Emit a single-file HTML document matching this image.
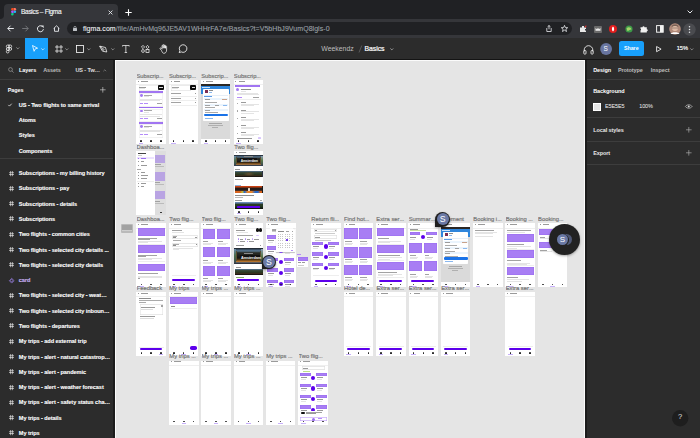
<!DOCTYPE html>
<html><head><meta charset="utf-8">
<style>
*{margin:0;padding:0;box-sizing:border-box}
html,body{width:700px;height:438px;overflow:hidden;background:#2c2c2c;font-family:"Liberation Sans",sans-serif}
.a{position:absolute}
svg{position:absolute;overflow:visible}
#tabs{left:0;top:0;width:700px;height:19px;background:#202124}
#tab{left:4px;top:4px;width:114px;height:16px;background:#35363a;border-radius:4px 4px 0 0}
#urlrow{left:0;top:19px;width:700px;height:18.5px;background:#35363a}
#pill{left:67px;top:21.6px;width:505px;height:13.9px;background:#202124;border-radius:7px}
#tb{left:0;top:37.5px;width:700px;height:21.5px;background:#2c2c2c}
#tbline{left:0;top:58.6px;width:700px;height:1.2px;background:#141414}
#left{left:0;top:59.8px;width:113px;height:379px;background:#2c2c2c}
#leftb{left:112.6px;top:59.8px;width:2px;height:379px;background:#1c1c1c}
#right{left:587px;top:59.8px;width:113px;height:379px;background:#2c2c2c}
#rightb{left:585px;top:59.8px;width:2px;height:379px;background:#1c1c1c}
#canvas{left:114.6px;top:59.8px;width:470.4px;height:380px;background:#e5e5e5;border-left:1.4px solid #fbfbfb;border-top:1.4px solid #fbfbfb;border-right:1.4px solid #fbfbfb;overflow:hidden}
.t{position:absolute;white-space:nowrap;line-height:1}
.fui{font-size:5.5px;letter-spacing:-0.08px;font-weight:bold;color:#fff}
.gry{color:#bdbdbd}
.div{position:absolute;height:1px;background:#3d3d3d}
.pg{position:absolute;left:18.8px;font-size:5.6px;letter-spacing:-0.08px;font-weight:bold;color:#fff;-webkit-text-stroke:0.1px #fff;white-space:nowrap;line-height:1}
.hash{position:absolute;left:9.3px;width:5px;height:5px}
.fr{position:absolute;width:29.6px;height:64px;background:#fff}
.lb{position:absolute;font-size:5.8px;color:#707070;white-space:nowrap;line-height:1;-webkit-text-stroke:0.16px #707070}
</style></head><body>
<!-- chrome tab strip -->
<div id="tabs" class="a"></div>
<div id="tab" class="a"></div>
<svg style="left:0;top:15px" width="4" height="4"><path d="M0 4 Q4 4 4 0 L4 4Z" fill="#35363a"/></svg>
<svg style="left:118px;top:15px" width="4" height="4"><path d="M4 4 Q0 4 0 0 L0 4Z" fill="#35363a"/></svg>
<svg style="left:10.6px;top:8.1px" width="5.2" height="7.6" viewBox="0 0 38 57"><path d="M19 28.5a9.5 9.5 0 1 1 19 0 9.5 9.5 0 0 1-19 0z" fill="#1abcfe"/><path d="M0 47.5A9.5 9.5 0 0 1 9.5 38H19v9.5a9.5 9.5 0 1 1-19 0z" fill="#0acf83"/><path d="M19 0v19h9.5a9.5 9.5 0 1 0 0-19H19z" fill="#ff7262"/><path d="M0 9.5A9.5 9.5 0 0 0 9.5 19H19V0H9.5A9.5 9.5 0 0 0 0 9.5z" fill="#f24e1e"/><path d="M0 28.5A9.5 9.5 0 0 0 9.5 38H19V19H9.5A9.5 9.5 0 0 0 0 28.5z" fill="#a259ff"/></svg>
<div class="t" style="left:21px;top:9px;font-size:6.6px;letter-spacing:-0.34px;color:#f1f3f4;-webkit-text-stroke:0.15px #f1f3f4">Basics – Figma</div>
<svg style="left:108.3px;top:9.6px" width="5" height="5"><path d="M0.6 0.6L4.4 4.4M4.4 0.6L0.6 4.4" stroke="#e8eaed" stroke-width="0.9"/></svg>
<svg style="left:124.8px;top:8.7px" width="7" height="7"><path d="M3.5 0.3V6.7M0.3 3.5H6.7" stroke="#fff" stroke-width="1.1"/></svg>
<svg style="left:686.5px;top:10.4px" width="6" height="4"><path d="M0.6 0.6L3 3 5.4 0.6" stroke="#e8eaed" stroke-width="1" fill="none"/></svg>
<!-- url row -->
<div id="urlrow" class="a"></div>
<svg style="left:7px;top:25.2px" width="7" height="7"><path d="M6.8 3.5H0.8M3.5 0.7L0.8 3.5 3.5 6.3" stroke="#e8eaed" stroke-width="1" fill="none"/></svg>
<svg style="left:22px;top:25.2px" width="7" height="7"><path d="M0.2 3.5H6.2M3.5 0.7L6.2 3.5 3.5 6.3" stroke="#77797d" stroke-width="0.9" fill="none"/></svg>
<svg style="left:37.3px;top:25.2px" width="7" height="7"><path d="M6 2.2A3 3 0 1 0 6.4 4.2" stroke="#e8eaed" stroke-width="1" fill="none"/><path d="M4.3 0.6L6.6 0.6 6.6 2.9Z" fill="#e8eaed"/></svg>
<svg style="left:52.5px;top:25px" width="7" height="7"><path d="M0.6 3.6L3.5 0.8 6.4 3.6M1.5 2.9V6.3H5.5V2.9" stroke="#e8eaed" stroke-width="0.9" fill="none"/></svg>
<div id="pill" class="a"></div>
<svg style="left:73px;top:26.3px" width="4" height="5"><rect x="0" y="1.9" width="4" height="3.1" rx="0.5" fill="#bdc1c6"/><path d="M0.9 2V1.5A1.1 1.1 0 0 1 3.1 1.5V2" stroke="#bdc1c6" stroke-width="0.7" fill="none"/></svg>
<div class="t" style="left:83px;top:25px;font-size:7px;letter-spacing:0.05px;color:#f1f3f4;-webkit-text-stroke:0.1px #e8eaed">figma.com<span style="color:#9aa0a6;-webkit-text-stroke:0.1px #9aa0a6">/file/AmHvMq96JE5AV1WHHrFA7e/Basics?t=V5bHbJ9VumQ8lgls-0</span></div>
<svg style="left:546px;top:24.8px" width="6" height="7"><path d="M3 0.5V4.3M1.5 1.9L3 0.5 4.5 1.9M0.8 3V6.5H5.2V3" stroke="#e8eaed" stroke-width="0.8" fill="none"/></svg>
<svg style="left:560.6px;top:25.2px" width="7" height="7"><path d="M3.5 0.4L4.4 2.6 6.7 2.7 4.9 4.2 5.5 6.5 3.5 5.2 1.5 6.5 2.1 4.2 0.3 2.7 2.6 2.6Z" stroke="#e8eaed" stroke-width="0.8" fill="none"/></svg>
<!-- extensions -->
<svg style="left:579px;top:25px" width="8" height="8"><path d="M1 2.5H3V1H5V2.5H7V4H6V5.5H7V7H1Z" fill="#e8e8e8"/><path d="M5.5 1L7.5 0.5 7 3Z" fill="#e53935"/></svg>
<svg style="left:594px;top:25.5px" width="8" height="7"><rect x="0" y="0" width="8" height="7" rx="1" fill="#6b6b6b"/><path d="M1.5 4.8L1.5 2 3 3.3 4 1.8 5 3.3 6.5 2 6.5 4.8Z" fill="#eee"/></svg>
<svg style="left:609.3px;top:24.7px" width="8" height="8"><circle cx="4" cy="4" r="4" fill="#e11d1d"/><path d="M4 1.5C5.5 2.5 5.6 5.8 4 6.6 2.5 5.8 2.5 2.5 4 1.5Z" fill="#fff"/></svg>
<svg style="left:624.6px;top:24.7px" width="8" height="8"><circle cx="4" cy="4" r="3.6" fill="#3d9a48"/><path d="M1.5 3.5C3 1.5 6 2 6.5 4.5 5 4 4 6 2.5 6Z" fill="#a7d36b"/></svg>
<svg style="left:640px;top:25px" width="8" height="8"><path d="M0.5 2.3H2.5A1 1 0 0 1 4.5 2.3H6.8V4.3A1 1 0 0 1 6.8 6.3V7.5H0.5V5.5A1 1 0 0 0 0.5 3.7Z" fill="#f1f1f1"/></svg>
<svg style="left:655.5px;top:25px" width="8" height="8"><rect x="0.6" y="0.6" width="6.6" height="6.6" stroke="#f1f1f1" stroke-width="1" fill="none"/><rect x="4" y="0.6" width="3.2" height="6.6" fill="#f1f1f1"/></svg>
<svg style="left:669px;top:23px" width="12" height="12"><circle cx="6" cy="6" r="5.8" fill="#b08a7a"/><circle cx="6" cy="5" r="3" fill="#e6c1ab"/><path d="M2.5 3.2C3 1 9 1 9.5 3.2L9 4C8 2.5 4 2.5 3 4Z" fill="#7a6357"/><rect x="3.3" y="4.3" width="5.4" height="1.4" rx="0.6" fill="none" stroke="#6d5a52" stroke-width="0.4"/><path d="M1.5 11C2.5 8.5 9.5 8.5 10.5 11" fill="#fff"/></svg>
<svg style="left:683px;top:22.7px" width="13" height="13"><circle cx="6.5" cy="6.5" r="6.2" fill="#4a4b4f"/><circle cx="6.5" cy="3.7" r="0.75" fill="#e8eaed"/><circle cx="6.5" cy="6.5" r="0.75" fill="#e8eaed"/><circle cx="6.5" cy="9.3" r="0.75" fill="#e8eaed"/></svg>

<!-- figma toolbar -->
<div id="tb" class="a"></div>
<div id="tbline" class="a"></div>
<svg style="left:6.4px;top:45px" width="6" height="8" viewBox="0 0 38 57"><path d="M19 28.5a9.5 9.5 0 1 1 19 0 9.5 9.5 0 0 1-19 0zM0 47.5A9.5 9.5 0 0 1 9.5 38H19v9.5a9.5 9.5 0 1 1-19 0zM19 0v19h9.5a9.5 9.5 0 1 0 0-19H19zM0 9.5A9.5 9.5 0 0 0 9.5 19H19V0H9.5A9.5 9.5 0 0 0 0 9.5zM0 28.5A9.5 9.5 0 0 0 9.5 38H19V19H9.5A9.5 9.5 0 0 0 0 28.5z" stroke="#fff" stroke-width="5" fill="none"/></svg>
<svg style="left:15.5px;top:47.3px" width="4" height="3"><path d="M0.4 0.5L1.8 1.9 3.2 0.5" stroke="#bbb" stroke-width="0.7" fill="none"/></svg>
<div class="a" style="left:24.7px;top:37.5px;width:23.3px;height:21.5px;background:#18a0fb"></div>
<svg style="left:32px;top:45.3px" width="6" height="7"><path d="M0.5 0.5L5.6 3.2 3.2 3.9 2.1 6.3Z" stroke="#fff" stroke-width="0.8" fill="none" stroke-linejoin="round"/></svg>
<svg style="left:41px;top:47.5px" width="4" height="3"><path d="M0.4 0.5L1.8 1.9 3.2 0.5" stroke="#fff" stroke-width="0.7" fill="none"/></svg>
<svg style="left:54.6px;top:44.8px" width="8" height="8"><path d="M2 0V8M6 0V8M0 2H8M0 6H8" stroke="#fff" stroke-width="0.7"/></svg>
<svg style="left:64.8px;top:47.5px" width="4" height="3"><path d="M0.4 0.5L1.8 1.9 3.2 0.5" stroke="#bbb" stroke-width="0.7" fill="none"/></svg>
<svg style="left:76.2px;top:44.8px" width="8" height="8"><rect x="0.5" y="0.5" width="7" height="7" stroke="#fff" stroke-width="0.8" fill="none"/></svg>
<svg style="left:87.3px;top:47.5px" width="4" height="3"><path d="M0.4 0.5L1.8 1.9 3.2 0.5" stroke="#bbb" stroke-width="0.7" fill="none"/></svg>
<svg style="left:99px;top:44.6px" width="9" height="8"><path d="M1 1.2L6.5 2.5 7.8 7 3.5 6.2 0.6 1.2ZM1 1.2L4 4.3" stroke="#fff" stroke-width="0.75" fill="none" stroke-linejoin="round"/><circle cx="4.4" cy="4.6" r="0.8" stroke="#fff" stroke-width="0.5" fill="none"/></svg>
<svg style="left:110.7px;top:47.5px" width="4" height="3"><path d="M0.4 0.5L1.8 1.9 3.2 0.5" stroke="#bbb" stroke-width="0.7" fill="none"/></svg>
<svg style="left:122px;top:44.6px" width="8" height="8"><path d="M0.5 1.5V0.5H7.2V1.5M3.85 0.5V7.5M2.6 7.5H5.1" stroke="#fff" stroke-width="0.7" fill="none"/></svg>
<svg style="left:140.6px;top:44.6px" width="9" height="8"><path d="M2 0.4L3.6 2 2 3.6 0.4 2Z M6.5 0.4L8.1 2 6.5 3.6 4.9 2Z" stroke="#fff" stroke-width="0.7" fill="none"/><circle cx="2" cy="6" r="1.4" stroke="#fff" stroke-width="0.7" fill="none"/><rect x="5" y="4.6" width="3" height="2.8" stroke="#fff" stroke-width="0.7" fill="none"/></svg>
<svg style="left:159px;top:44px" width="10" height="10"><path d="M2.5 6.5L1 4.8C0.6 4.2 1.4 3.6 2 4.2L3 5.2V1.8C3 1 4.1 1 4.1 1.8V4.2 1.2C4.1 0.4 5.3 0.4 5.3 1.2V4.2 1.7C5.3 0.9 6.5 0.9 6.5 1.7V4.3 2.5C6.5 1.8 7.6 1.8 7.6 2.5V6C7.6 8 6.5 9.3 5 9.3 3.8 9.3 3.3 8.6 2.5 6.5Z" stroke="#fff" stroke-width="0.7" fill="none" stroke-linejoin="round"/></svg>
<svg style="left:178.2px;top:44.3px" width="10" height="10"><path d="M1.2 8.6L1.9 6.6A3.8 3.8 0 1 1 3.3 7.9Z" stroke="#fff" stroke-width="0.8" fill="none" stroke-linejoin="round"/></svg>
<div class="t" style="left:321.3px;top:46.2px;font-size:6.9px;color:#bdbdbd">Weekendz</div>
<svg style="left:357.5px;top:45.3px" width="5" height="8"><path d="M3.8 0.5L1 7.5" stroke="#777" stroke-width="0.6"/></svg>
<div class="t" style="left:364.5px;top:45.9px;font-size:6.9px;color:#fff;letter-spacing:-0.05px;-webkit-text-stroke:0.2px #fff">Basics</div>
<svg style="left:389.6px;top:47.6px" width="4" height="3"><path d="M0.4 0.5L1.8 1.9 3.2 0.5" stroke="#ccc" stroke-width="0.7" fill="none"/></svg>
<svg style="left:582.5px;top:44.5px" width="11" height="10"><path d="M1.2 6.5V5A4.3 4.3 0 0 1 9.8 5V6.5" stroke="#fff" stroke-width="0.8" fill="none"/><rect x="0.8" y="5.5" width="2.2" height="3.6" rx="0.8" stroke="#fff" stroke-width="0.8" fill="none"/><rect x="8" y="5.5" width="2.2" height="3.6" rx="0.8" stroke="#fff" stroke-width="0.8" fill="none"/></svg>
<svg style="left:599.6px;top:43px" width="12.4" height="12"><circle cx="6.1" cy="6" r="5.9" fill="#6875a0"/></svg>
<div class="t" style="left:603.4px;top:45.8px;font-size:6.5px;color:#fff">S</div>
<div class="a" style="left:618.7px;top:41px;width:25.6px;height:15.4px;background:#18a0fb;border-radius:2.5px"></div>
<div class="t" style="left:623.9px;top:45.9px;font-size:5.3px;color:#fff;font-weight:bold">Share</div>
<svg style="left:655.8px;top:45.6px" width="6" height="7"><path d="M0.6 0.5L5.1 3.1 0.6 5.7Z" stroke="#eee" stroke-width="0.9" fill="none" stroke-linejoin="round"/></svg>
<div class="t" style="left:676.8px;top:45.6px;font-size:5.7px;letter-spacing:-0.1px;color:#fff;-webkit-text-stroke:0.15px #fff">15%</div>
<svg style="left:689.8px;top:47.6px" width="4" height="3"><path d="M0.4 0.5L1.8 1.9 3.2 0.5" stroke="#bbb" stroke-width="0.7" fill="none"/></svg>

<!-- left sidebar -->
<div id="left" class="a"></div>
<div id="leftb" class="a"></div>
<svg style="left:8.2px;top:67.3px" width="6" height="6"><circle cx="2.5" cy="2.5" r="1.9" stroke="#aaa" stroke-width="0.6" fill="none"/><path d="M3.9 3.9L5.6 5.6" stroke="#aaa" stroke-width="0.6"/></svg>
<div class="t fui" style="left:18.9px;top:67.80px">Layers</div>
<div class="t fui gry" style="left:43.2px;top:67.80px">Assets</div>
<div class="t fui" style="left:75.4px;top:67.80px;color:#e0e0e0">US - Tw…</div>
<svg style="left:102.8px;top:68.8px" width="4" height="3"><path d="M0.4 2.2L1.8 0.8 3.2 2.2" stroke="#999" stroke-width="0.6" fill="none"/></svg>
<div class="div" style="left:0;top:78.8px;width:113px"></div>
<div class="t fui" style="left:7.7px;top:87.50px">Pages</div>
<svg style="left:100px;top:87px" width="6" height="6"><path d="M2.8 0V5.6M0 2.8H5.6" stroke="#ddd" stroke-width="0.6"/></svg>
<svg style="left:8.4px;top:103px" width="4" height="4"><path d="M0.3 1.9L1.5 3.1 3.7 0.7" stroke="#fff" stroke-width="0.7" fill="none"/></svg>
<div class="pg" style="top:102.90px">US - Two flights to same arrival</div>
<div class="pg" style="top:118.10px">Atoms</div>
<div class="pg" style="top:133.30px">Styles</div>
<div class="pg" style="top:148.50px">Components</div>
<div class="div" style="left:0;top:158px;width:113px"></div>
<svg style="left:9.4px;top:170.60px" width="5" height="5.2"><path d="M1.6 0V5.2M3.4 0V5.2M0 1.7H5M0 3.5H5" stroke="#fff" stroke-width="0.55"/></svg>
<div class="pg" style="top:171.20px">Subscriptions - my billing history</div>
<svg style="left:9.4px;top:185.88px" width="5" height="5.2"><path d="M1.6 0V5.2M3.4 0V5.2M0 1.7H5M0 3.5H5" stroke="#fff" stroke-width="0.55"/></svg>
<div class="pg" style="top:186.48px">Subscriptions - pay</div>
<svg style="left:9.4px;top:201.16px" width="5" height="5.2"><path d="M1.6 0V5.2M3.4 0V5.2M0 1.7H5M0 3.5H5" stroke="#fff" stroke-width="0.55"/></svg>
<div class="pg" style="top:201.76px">Subscriptions - details</div>
<svg style="left:9.4px;top:216.44px" width="5" height="5.2"><path d="M1.6 0V5.2M3.4 0V5.2M0 1.7H5M0 3.5H5" stroke="#fff" stroke-width="0.55"/></svg>
<div class="pg" style="top:217.04px">Subscriptions</div>
<svg style="left:9.4px;top:231.72px" width="5" height="5.2"><path d="M1.6 0V5.2M3.4 0V5.2M0 1.7H5M0 3.5H5" stroke="#fff" stroke-width="0.55"/></svg>
<div class="pg" style="top:232.32px">Two flights - common cities</div>
<svg style="left:9.4px;top:247.00px" width="5" height="5.2"><path d="M1.6 0V5.2M3.4 0V5.2M0 1.7H5M0 3.5H5" stroke="#fff" stroke-width="0.55"/></svg>
<div class="pg" style="top:247.60px">Two flights - selected city details ...</div>
<svg style="left:9.4px;top:262.28px" width="5" height="5.2"><path d="M1.6 0V5.2M3.4 0V5.2M0 1.7H5M0 3.5H5" stroke="#fff" stroke-width="0.55"/></svg>
<div class="pg" style="top:262.88px">Two flights - selected city details</div>
<svg style="left:9.3px;top:277.56px" width="5.4" height="5.4"><path d="M2.7 0.3L5.1 2.7 2.7 5.1 0.3 2.7Z M2.7 1.3L4.1 2.7 2.7 4.1 1.3 2.7Z" stroke="#a78bfa" stroke-width="0.6" fill="none"/></svg>
<div class="pg" style="top:278.16px;color:#b794f6">card</div>
<svg style="left:9.4px;top:292.84px" width="5" height="5.2"><path d="M1.6 0V5.2M3.4 0V5.2M0 1.7H5M0 3.5H5" stroke="#fff" stroke-width="0.55"/></svg>
<div class="pg" style="top:293.44px">Two flights - selected city - weat…</div>
<svg style="left:9.4px;top:308.12px" width="5" height="5.2"><path d="M1.6 0V5.2M3.4 0V5.2M0 1.7H5M0 3.5H5" stroke="#fff" stroke-width="0.55"/></svg>
<div class="pg" style="top:308.72px">Two flights - selected city inboun…</div>
<svg style="left:9.4px;top:323.40px" width="5" height="5.2"><path d="M1.6 0V5.2M3.4 0V5.2M0 1.7H5M0 3.5H5" stroke="#fff" stroke-width="0.55"/></svg>
<div class="pg" style="top:324.00px">Two flights - departures</div>
<svg style="left:9.4px;top:338.68px" width="5" height="5.2"><path d="M1.6 0V5.2M3.4 0V5.2M0 1.7H5M0 3.5H5" stroke="#fff" stroke-width="0.55"/></svg>
<div class="pg" style="top:339.28px">My trips - add external trip</div>
<svg style="left:9.4px;top:353.96px" width="5" height="5.2"><path d="M1.6 0V5.2M3.4 0V5.2M0 1.7H5M0 3.5H5" stroke="#fff" stroke-width="0.55"/></svg>
<div class="pg" style="top:354.56px">My trips - alert - natural catastrop…</div>
<svg style="left:9.4px;top:369.24px" width="5" height="5.2"><path d="M1.6 0V5.2M3.4 0V5.2M0 1.7H5M0 3.5H5" stroke="#fff" stroke-width="0.55"/></svg>
<div class="pg" style="top:369.84px">My trips - alert - pandemic</div>
<svg style="left:9.4px;top:384.52px" width="5" height="5.2"><path d="M1.6 0V5.2M3.4 0V5.2M0 1.7H5M0 3.5H5" stroke="#fff" stroke-width="0.55"/></svg>
<div class="pg" style="top:385.12px">My trips - alert - weather forecast</div>
<svg style="left:9.4px;top:399.80px" width="5" height="5.2"><path d="M1.6 0V5.2M3.4 0V5.2M0 1.7H5M0 3.5H5" stroke="#fff" stroke-width="0.55"/></svg>
<div class="pg" style="top:400.40px">My trips - alert - safety status cha…</div>
<svg style="left:9.4px;top:415.08px" width="5" height="5.2"><path d="M1.6 0V5.2M3.4 0V5.2M0 1.7H5M0 3.5H5" stroke="#fff" stroke-width="0.55"/></svg>
<div class="pg" style="top:415.68px">My trips - details</div>
<svg style="left:9.4px;top:430.36px" width="5" height="5.2"><path d="M1.6 0V5.2M3.4 0V5.2M0 1.7H5M0 3.5H5" stroke="#fff" stroke-width="0.55"/></svg>
<div class="pg" style="top:430.96px">My trips</div>

<!-- right -->
<div id="right" class="a"></div>
<div id="rightb" class="a"></div>
<div class="t fui" style="left:593.2px;top:67.90px">Design</div>
<div class="t fui gry" style="left:617.9px;top:67.90px">Prototype</div>
<div class="t fui gry" style="left:650.7px;top:67.90px">Inspect</div>
<div class="div" style="left:587px;top:78.6px;width:113px"></div>
<div class="t fui" style="left:593.2px;top:88.90px">Background</div>
<div class="a" style="left:593.2px;top:103px;width:7.8px;height:7.6px;background:#e5e5e5;border:0.6px solid #fff"></div>
<div class="t" style="left:605px;top:104.4px;font-size:5.5px;color:#f0f0f0;letter-spacing:-0.1px">E5E5E5</div>
<div class="t" style="left:639.2px;top:104.4px;font-size:5.5px;color:#f0f0f0;letter-spacing:-0.1px">100%</div>
<svg style="left:684.8px;top:103.9px" width="7.5" height="5"><path d="M0.4 2.5C2 0.2 5.5 0.2 7.1 2.5 5.5 4.8 2 4.8 0.4 2.5Z" stroke="#ddd" stroke-width="0.6" fill="none"/><circle cx="3.75" cy="2.5" r="1" fill="#ddd"/></svg>
<div class="div" style="left:587px;top:117.3px;width:113px"></div>
<div class="t fui" style="left:593.2px;top:127.70px;color:#e8e8e8">Local styles</div>
<svg style="left:685.5px;top:127.2px" width="6" height="6"><path d="M2.8 0V5.6M0 2.8H5.6" stroke="#bbb" stroke-width="0.6"/></svg>
<div class="div" style="left:587px;top:140.8px;width:113px"></div>
<div class="t fui" style="left:593.2px;top:150.80px;color:#e8e8e8">Export</div>
<svg style="left:685.5px;top:150.3px" width="6" height="6"><path d="M2.8 0V5.6M0 2.8H5.6" stroke="#bbb" stroke-width="0.6"/></svg>
<div class="div" style="left:587px;top:164px;width:113px"></div>
<svg style="left:672.2px;top:409.5px" width="17" height="17"><circle cx="8.2" cy="8.2" r="8.2" fill="#1e1e1e"/></svg>
<div class="t" style="left:678.1px;top:413.2px;font-size:7.6px;color:#e0e0e0">?</div>

<!-- canvas -->
<div id="canvas" class="a"></div>
<!--CANVAS-->
<div class="lb" style="left:136.50px;top:74.10px;width:30.60px;overflow:hidden">Subscrip<span style="font-size:4.6px;letter-spacing:-0.2px">…</span></div>
<div class="a" style="left:136.20px;top:80.20px;width:29.60px;height:64.00px;background:#fff;"></div>
<div class="a" style="left:138.10px;top:80.90px;width:0.80px;height:1.30px;background:#999;"></div>
<div class="a" style="left:141.20px;top:81.00px;width:6.70px;height:1.00px;background:#9a9a9a;"></div>
<div class="a" style="left:136.20px;top:84.40px;width:29.60px;height:0.70px;background:#efefef;"></div>
<div class="a" style="left:138.50px;top:85.00px;width:20.50px;height:5.60px;background:#fff;border-radius:0.5px;box-shadow:inset 0 0 0 0.4px #dedede"></div>
<div class="a" style="left:139.40px;top:86.50px;width:7.00px;height:0.70px;background:#9a9a9a;"></div>
<div class="a" style="left:139.40px;top:88.10px;width:6.00px;height:0.60px;background:#e4e4e4;"></div>
<div class="a" style="left:157.80px;top:85.10px;width:6.20px;height:5.00px;background:#0c0c0c;border-radius:1px;"></div>
<div class="a" style="left:159.20px;top:87.30px;width:3.40px;height:0.70px;background:#ddd;"></div>
<div class="a" style="left:138.90px;top:91.40px;width:24.60px;height:1.70px;background:#a87ef4;box-shadow:inset 0 0 0 0.5px #9a6cf0"></div>
<div class="a" style="left:138.90px;top:93.10px;width:24.60px;height:13.50px;background:#fff;box-shadow:inset 0 0 0 0.4px #e4e4e4"></div>
<div class="a" style="left:139.80px;top:94.20px;width:2.80px;height:2.80px;background:#a47af2;border-radius:1.4px;"></div>
<div class="a" style="left:144.20px;top:94.80px;width:8.00px;height:0.90px;background:#a8a8a8;"></div>
<div class="a" style="left:144.20px;top:96.30px;width:5.00px;height:0.60px;background:#e4e4e4;"></div>
<div class="a" style="left:139.50px;top:98.80px;width:22.00px;height:0.60px;background:#e4e4e4;"></div>
<div class="a" style="left:139.50px;top:100.20px;width:20.00px;height:0.60px;background:#e4e4e4;"></div>
<div class="a" style="left:139.50px;top:102.90px;width:3.50px;height:0.80px;background:#b48cf8;"></div>
<div class="a" style="left:144.40px;top:102.90px;width:3.50px;height:0.80px;background:#b48cf8;"></div>
<div class="a" style="left:157.20px;top:102.90px;width:5.00px;height:0.80px;background:#a2a2a2;"></div>
<div class="a" style="left:138.90px;top:106.80px;width:24.60px;height:1.70px;background:#a87ef4;box-shadow:inset 0 0 0 0.5px #9a6cf0"></div>
<div class="a" style="left:138.90px;top:108.50px;width:24.60px;height:13.50px;background:#fff;box-shadow:inset 0 0 0 0.4px #e4e4e4"></div>
<div class="a" style="left:139.80px;top:109.60px;width:2.80px;height:2.80px;background:#a47af2;border-radius:1.4px;"></div>
<div class="a" style="left:144.20px;top:110.20px;width:8.00px;height:0.90px;background:#a8a8a8;"></div>
<div class="a" style="left:144.20px;top:111.70px;width:5.00px;height:0.60px;background:#e4e4e4;"></div>
<div class="a" style="left:139.50px;top:114.20px;width:22.00px;height:0.60px;background:#e4e4e4;"></div>
<div class="a" style="left:139.50px;top:115.60px;width:20.00px;height:0.60px;background:#e4e4e4;"></div>
<div class="a" style="left:139.50px;top:118.30px;width:3.50px;height:0.80px;background:#b48cf8;"></div>
<div class="a" style="left:144.40px;top:118.30px;width:3.50px;height:0.80px;background:#b48cf8;"></div>
<div class="a" style="left:157.20px;top:118.30px;width:5.00px;height:0.80px;background:#a2a2a2;"></div>
<div class="a" style="left:138.90px;top:122.40px;width:24.60px;height:1.70px;background:#a87ef4;box-shadow:inset 0 0 0 0.5px #9a6cf0"></div>
<div class="a" style="left:138.90px;top:124.10px;width:24.60px;height:13.50px;background:#fff;box-shadow:inset 0 0 0 0.4px #e4e4e4"></div>
<div class="a" style="left:139.80px;top:125.20px;width:2.80px;height:2.80px;background:#a47af2;border-radius:1.4px;"></div>
<div class="a" style="left:144.20px;top:125.80px;width:8.00px;height:0.90px;background:#a8a8a8;"></div>
<div class="a" style="left:144.20px;top:127.30px;width:5.00px;height:0.60px;background:#e4e4e4;"></div>
<div class="a" style="left:139.50px;top:129.80px;width:22.00px;height:0.60px;background:#e4e4e4;"></div>
<div class="a" style="left:139.50px;top:131.20px;width:20.00px;height:0.60px;background:#e4e4e4;"></div>
<div class="a" style="left:139.50px;top:133.90px;width:3.50px;height:0.80px;background:#b48cf8;"></div>
<div class="a" style="left:144.40px;top:133.90px;width:3.50px;height:0.80px;background:#b48cf8;"></div>
<div class="a" style="left:157.20px;top:133.90px;width:5.00px;height:0.80px;background:#a2a2a2;"></div>
<div class="a" style="left:140.40px;top:140.30px;width:1.60px;height:1.90px;background:#2a2a2a;border-radius:0.8px 0.8px 0.2px 0.2px"></div>
<div class="a" style="left:150.20px;top:140.30px;width:1.60px;height:1.90px;background:#2a2a2a;border-radius:0.8px 0.8px 0.2px 0.2px"></div>
<div class="a" style="left:160.00px;top:140.30px;width:1.60px;height:1.90px;background:#2a2a2a;border-radius:0.8px 0.8px 0.2px 0.2px"></div>
<div class="a" style="left:138.90px;top:142.60px;width:4.60px;height:0.70px;background:#c8b0fb;"></div>
<div class="lb" style="left:168.90px;top:74.10px;width:30.60px;overflow:hidden">Subscrip<span style="font-size:4.6px;letter-spacing:-0.2px">…</span></div>
<div class="a" style="left:168.60px;top:80.20px;width:29.60px;height:64.00px;background:#fff;"></div>
<div class="a" style="left:170.50px;top:80.90px;width:0.80px;height:1.30px;background:#999;"></div>
<div class="a" style="left:173.60px;top:81.00px;width:6.70px;height:1.00px;background:#9a9a9a;"></div>
<div class="a" style="left:168.60px;top:84.40px;width:29.60px;height:0.70px;background:#efefef;"></div>
<div class="a" style="left:171.00px;top:85.20px;width:19.80px;height:5.50px;background:#fff;border-radius:0.5px;box-shadow:inset 0 0 0 0.4px #d8d8d8"></div>
<div class="a" style="left:172.20px;top:86.50px;width:7.00px;height:0.70px;background:#a2a2a2;"></div>
<div class="a" style="left:172.20px;top:88.20px;width:6.00px;height:0.60px;background:#e4e4e4;"></div>
<div class="a" style="left:190.20px;top:85.10px;width:6.20px;height:5.00px;background:#0c0c0c;border-radius:1px;"></div>
<div class="a" style="left:191.60px;top:87.30px;width:3.40px;height:0.70px;background:#ddd;"></div>
<div class="a" style="left:171.30px;top:93.10px;width:9.50px;height:0.80px;background:#a2a2a2;"></div>
<div class="a" style="left:195.00px;top:93.10px;width:0.90px;height:0.90px;background:#999;"></div>
<div class="a" style="left:170.60px;top:95.50px;width:26.00px;height:0.30px;background:#eee;"></div>
<div class="a" style="left:171.30px;top:97.90px;width:9.50px;height:0.80px;background:#a2a2a2;"></div>
<div class="a" style="left:195.00px;top:97.90px;width:0.90px;height:0.90px;background:#999;"></div>
<div class="a" style="left:170.60px;top:100.30px;width:26.00px;height:0.30px;background:#eee;"></div>
<div class="a" style="left:171.30px;top:102.30px;width:9.50px;height:0.80px;background:#a2a2a2;"></div>
<div class="a" style="left:195.00px;top:102.30px;width:0.90px;height:0.90px;background:#999;"></div>
<div class="a" style="left:170.60px;top:104.70px;width:26.00px;height:0.30px;background:#eee;"></div>
<div class="a" style="left:172.80px;top:140.30px;width:1.60px;height:1.90px;background:#2a2a2a;border-radius:0.8px 0.8px 0.2px 0.2px"></div>
<div class="a" style="left:182.60px;top:140.30px;width:1.60px;height:1.90px;background:#2a2a2a;border-radius:0.8px 0.8px 0.2px 0.2px"></div>
<div class="a" style="left:192.40px;top:140.30px;width:1.60px;height:1.90px;background:#2a2a2a;border-radius:0.8px 0.8px 0.2px 0.2px"></div>
<div class="a" style="left:171.30px;top:142.60px;width:4.60px;height:0.70px;background:#c8b0fb;"></div>
<div class="lb" style="left:201.20px;top:74.10px;width:30.60px;overflow:hidden">Subscrip<span style="font-size:4.6px;letter-spacing:-0.2px">…</span></div>
<div class="a" style="left:200.90px;top:80.20px;width:29.60px;height:64.00px;background:#fff;"></div>
<div class="a" style="left:202.80px;top:80.90px;width:0.80px;height:1.30px;background:#999;"></div>
<div class="a" style="left:205.90px;top:81.00px;width:6.70px;height:1.00px;background:#9a9a9a;"></div>
<div class="a" style="left:200.90px;top:84.40px;width:29.60px;height:0.70px;background:#efefef;"></div>
<div class="a" style="left:200.90px;top:84.60px;width:29.60px;height:54.40px;background:#dadada;"></div>
<div class="a" style="left:200.90px;top:84.10px;width:29.60px;height:1.80px;background:#2b2724;"></div>
<div class="a" style="left:200.90px;top:85.90px;width:29.60px;height:8.40px;background:#2f86dc;"></div>
<div class="a" style="left:202.40px;top:86.80px;width:8.00px;height:0.60px;background:#cfe3f7;"></div>
<div class="a" style="left:203.40px;top:88.80px;width:25.20px;height:31.80px;background:#fff;border-radius:0.8px;"></div>
<div class="a" style="left:204.90px;top:89.70px;width:3.20px;height:3.60px;background:#7a2d52;"></div>
<div class="a" style="left:209.40px;top:90.10px;width:4.00px;height:0.70px;background:#8c8c8c;"></div>
<div class="a" style="left:209.40px;top:91.80px;width:2.50px;height:0.60px;background:#8ab8ee;"></div>
<div class="a" style="left:204.10px;top:94.50px;width:23.80px;height:0.40px;background:#e6eef7;"></div>
<div class="a" style="left:204.10px;top:95.60px;width:8.00px;height:0.70px;background:#5a9ae6;"></div>
<div class="a" style="left:204.10px;top:97.80px;width:23.80px;height:2.40px;background:#eaf4fd;"></div>
<div class="a" style="left:204.70px;top:98.60px;width:5.00px;height:0.60px;background:#9a9a9a;"></div>
<div class="a" style="left:222.40px;top:98.50px;width:5.00px;height:0.90px;background:#c9a28a;"></div>
<div class="a" style="left:204.70px;top:101.50px;width:12.00px;height:0.60px;background:#aaa;"></div>
<div class="a" style="left:204.10px;top:103.60px;width:23.80px;height:2.40px;background:#eaf4fd;"></div>
<div class="a" style="left:204.70px;top:104.50px;width:5.00px;height:0.60px;background:#a2a2a2;"></div>
<div class="a" style="left:214.90px;top:104.50px;width:4.00px;height:0.60px;background:#a2a2a2;"></div>
<div class="a" style="left:222.90px;top:104.50px;width:4.00px;height:0.60px;background:#8ab8ee;"></div>
<div class="a" style="left:204.70px;top:107.30px;width:10.00px;height:0.60px;background:#aaa;"></div>
<div class="a" style="left:204.10px;top:108.80px;width:23.80px;height:2.40px;background:#eaf4fd;"></div>
<div class="a" style="left:204.70px;top:109.70px;width:5.00px;height:0.60px;background:#a2a2a2;"></div>
<div class="a" style="left:204.70px;top:112.40px;width:13.00px;height:0.60px;background:#aaa;"></div>
<div class="a" style="left:204.70px;top:113.80px;width:14.00px;height:0.60px;background:#ccc;"></div>
<div class="a" style="left:204.10px;top:114.20px;width:23.60px;height:2.20px;background:#1a73e8;border-radius:1.1px;"></div>
<div class="a" style="left:204.70px;top:118.20px;width:8.00px;height:0.70px;background:#8ab8ee;"></div>
<div class="a" style="left:208.90px;top:122.80px;width:13.00px;height:0.60px;background:#a8a8a8;"></div>
<div class="a" style="left:207.90px;top:124.80px;width:15.00px;height:0.60px;background:#b0b0b0;"></div>
<div class="a" style="left:212.40px;top:126.80px;width:6.00px;height:0.60px;background:#b0b0b0;"></div>
<div class="a" style="left:205.10px;top:140.30px;width:1.60px;height:1.90px;background:#2a2a2a;border-radius:0.8px 0.8px 0.2px 0.2px"></div>
<div class="a" style="left:214.90px;top:140.30px;width:1.60px;height:1.90px;background:#2a2a2a;border-radius:0.8px 0.8px 0.2px 0.2px"></div>
<div class="a" style="left:224.70px;top:140.30px;width:1.60px;height:1.90px;background:#2a2a2a;border-radius:0.8px 0.8px 0.2px 0.2px"></div>
<div class="a" style="left:203.60px;top:142.60px;width:4.60px;height:0.70px;background:#c8b0fb;"></div>
<div class="lb" style="left:233.80px;top:74.10px;width:30.60px;overflow:hidden">Subscrip<span style="font-size:4.6px;letter-spacing:-0.2px">…</span></div>
<div class="a" style="left:233.50px;top:80.20px;width:29.60px;height:64.00px;background:#fff;"></div>
<div class="a" style="left:235.40px;top:80.90px;width:0.80px;height:1.30px;background:#999;"></div>
<div class="a" style="left:238.50px;top:81.00px;width:6.70px;height:1.00px;background:#9a9a9a;"></div>
<div class="a" style="left:233.50px;top:84.40px;width:29.60px;height:0.70px;background:#efefef;"></div>
<div class="a" style="left:235.10px;top:84.90px;width:24.60px;height:1.90px;background:#a87ef4;box-shadow:inset 0 0 0 0.5px #9a6cf0"></div>
<div class="a" style="left:236.00px;top:88.00px;width:3.00px;height:3.00px;background:#a47af2;border-radius:1.5px;"></div>
<div class="a" style="left:240.80px;top:88.80px;width:10.00px;height:1.00px;background:#8c8c8c;"></div>
<div class="a" style="left:240.80px;top:90.60px;width:5.00px;height:0.60px;background:#e4e4e4;"></div>
<div class="a" style="left:236.50px;top:92.90px;width:21.00px;height:0.60px;background:#e4e4e4;"></div>
<div class="a" style="left:236.50px;top:94.30px;width:22.00px;height:0.60px;background:#e4e4e4;"></div>
<div class="a" style="left:236.50px;top:96.70px;width:5.00px;height:0.80px;background:#b48cf8;"></div>
<div class="a" style="left:253.20px;top:96.70px;width:5.70px;height:0.80px;background:#a2a2a2;"></div>
<div class="a" style="left:235.70px;top:99.20px;width:25.50px;height:0.30px;background:#eee;"></div>
<div class="a" style="left:236.50px;top:102.80px;width:1.30px;height:1.30px;background:#a2a2a2;border-radius:0.3px;"></div>
<div class="a" style="left:240.80px;top:102.00px;width:5.50px;height:0.80px;background:#9a9a9a;"></div>
<div class="a" style="left:240.80px;top:103.70px;width:18.00px;height:0.60px;background:#e4e4e4;"></div>
<div class="a" style="left:240.80px;top:105.10px;width:13.00px;height:0.60px;background:#e4e4e4;"></div>
<div class="a" style="left:236.50px;top:110.40px;width:1.30px;height:1.30px;background:#a2a2a2;border-radius:0.3px;"></div>
<div class="a" style="left:240.80px;top:109.60px;width:5.50px;height:0.80px;background:#9a9a9a;"></div>
<div class="a" style="left:240.80px;top:111.30px;width:18.00px;height:0.60px;background:#e4e4e4;"></div>
<div class="a" style="left:240.80px;top:112.70px;width:13.00px;height:0.60px;background:#e4e4e4;"></div>
<div class="a" style="left:236.50px;top:118.10px;width:1.30px;height:1.30px;background:#a2a2a2;border-radius:0.3px;"></div>
<div class="a" style="left:240.80px;top:117.30px;width:5.50px;height:0.80px;background:#9a9a9a;"></div>
<div class="a" style="left:240.80px;top:119.00px;width:18.00px;height:0.60px;background:#e4e4e4;"></div>
<div class="a" style="left:240.80px;top:120.40px;width:13.00px;height:0.60px;background:#e4e4e4;"></div>
<div class="a" style="left:236.50px;top:125.70px;width:1.30px;height:1.30px;background:#a2a2a2;border-radius:0.3px;"></div>
<div class="a" style="left:240.80px;top:124.90px;width:5.50px;height:0.80px;background:#9a9a9a;"></div>
<div class="a" style="left:240.80px;top:126.60px;width:18.00px;height:0.60px;background:#e4e4e4;"></div>
<div class="a" style="left:240.80px;top:128.00px;width:13.00px;height:0.60px;background:#e4e4e4;"></div>
<div class="a" style="left:236.50px;top:132.80px;width:1.30px;height:1.30px;background:#a2a2a2;border-radius:0.3px;"></div>
<div class="a" style="left:240.80px;top:132.00px;width:5.50px;height:0.80px;background:#9a9a9a;"></div>
<div class="a" style="left:240.80px;top:133.70px;width:18.00px;height:0.60px;background:#e4e4e4;"></div>
<div class="a" style="left:240.80px;top:135.10px;width:13.00px;height:0.60px;background:#e4e4e4;"></div>
<div class="a" style="left:236.50px;top:137.80px;width:15.00px;height:0.80px;background:#999;"></div>
<div class="a" style="left:257.50px;top:137.40px;width:3.00px;height:1.50px;background:#d8c6fb;border-radius:0.6px;"></div>
<div class="a" style="left:237.70px;top:140.30px;width:1.60px;height:1.90px;background:#2a2a2a;border-radius:0.8px 0.8px 0.2px 0.2px"></div>
<div class="a" style="left:247.50px;top:140.30px;width:1.60px;height:1.90px;background:#2a2a2a;border-radius:0.8px 0.8px 0.2px 0.2px"></div>
<div class="a" style="left:257.30px;top:140.30px;width:1.60px;height:1.90px;background:#2a2a2a;border-radius:0.8px 0.8px 0.2px 0.2px"></div>
<div class="a" style="left:236.20px;top:142.60px;width:4.60px;height:0.70px;background:#c8b0fb;"></div>
<div class="lb" style="left:136.50px;top:144.70px;width:30.60px;overflow:hidden">Dashboa<span style="font-size:4.6px;letter-spacing:-0.2px">…</span></div>
<div class="a" style="left:136.20px;top:150.80px;width:29.60px;height:64.00px;background:#fff;"></div>
<div class="a" style="left:136.20px;top:150.80px;width:29.60px;height:64.00px;background:#dedede;"></div>
<div class="a" style="left:154.90px;top:154.80px;width:10.10px;height:8.50px;background:#b9a4e3;"></div>
<div class="a" style="left:154.90px;top:164.30px;width:6.00px;height:0.80px;background:#a2a2a2;"></div>
<div class="a" style="left:154.90px;top:166.40px;width:9.00px;height:0.60px;background:#bbb;"></div>
<div class="a" style="left:154.90px;top:172.30px;width:10.10px;height:8.30px;background:#b9a4e3;"></div>
<div class="a" style="left:154.90px;top:182.10px;width:5.00px;height:0.80px;background:#a2a2a2;"></div>
<div class="a" style="left:154.90px;top:184.10px;width:9.00px;height:0.60px;background:#bbb;"></div>
<div class="a" style="left:154.90px;top:190.80px;width:10.10px;height:8.30px;background:#b9a4e3;"></div>
<div class="a" style="left:154.90px;top:200.60px;width:5.00px;height:0.80px;background:#a2a2a2;"></div>
<div class="a" style="left:154.90px;top:202.60px;width:9.00px;height:0.60px;background:#bbb;"></div>
<div class="a" style="left:160.20px;top:211.50px;width:1.50px;height:1.50px;background:#333;border-radius:0.3px;"></div>
<div class="a" style="left:136.20px;top:150.80px;width:19.00px;height:64.00px;background:#fff;"></div>
<div class="a" style="left:137.90px;top:152.90px;width:8.00px;height:1.00px;background:#444;"></div>
<div class="a" style="left:137.90px;top:154.80px;width:4.00px;height:0.50px;background:#ccc;"></div>
<div class="a" style="left:137.20px;top:157.00px;width:17.00px;height:2.20px;background:#ede3ff;"></div>
<div class="a" style="left:138.00px;top:157.70px;width:1.10px;height:1.00px;background:#9b6ff0;"></div>
<div class="a" style="left:140.50px;top:157.90px;width:5.00px;height:0.70px;background:#9b6ff0;"></div>
<div class="a" style="left:138.00px;top:161.10px;width:1.10px;height:1.00px;background:#9a9a9a;"></div>
<div class="a" style="left:140.50px;top:161.20px;width:3.00px;height:0.70px;background:#999;"></div>
<div class="a" style="left:138.00px;top:164.60px;width:1.10px;height:1.00px;background:#9a9a9a;"></div>
<div class="a" style="left:140.50px;top:164.70px;width:6.00px;height:0.70px;background:#999;"></div>
<div class="a" style="left:137.40px;top:168.60px;width:4.00px;height:0.60px;background:#aaa;"></div>
<div class="a" style="left:138.00px;top:171.60px;width:1.10px;height:1.00px;background:#9a9a9a;"></div>
<div class="a" style="left:140.50px;top:171.70px;width:4.00px;height:0.70px;background:#999;"></div>
<div class="a" style="left:138.00px;top:175.00px;width:1.10px;height:1.00px;background:#9a9a9a;"></div>
<div class="a" style="left:140.50px;top:175.10px;width:7.00px;height:0.70px;background:#999;"></div>
<div class="a" style="left:138.00px;top:178.30px;width:1.10px;height:1.00px;background:#9a9a9a;"></div>
<div class="a" style="left:140.50px;top:178.40px;width:6.00px;height:0.70px;background:#999;"></div>
<div class="a" style="left:137.40px;top:181.10px;width:16.50px;height:0.30px;background:#eee;"></div>
<div class="a" style="left:138.00px;top:183.00px;width:1.10px;height:1.00px;background:#9a9a9a;"></div>
<div class="a" style="left:140.50px;top:183.10px;width:5.00px;height:0.70px;background:#999;"></div>
<div class="a" style="left:138.00px;top:186.30px;width:1.10px;height:1.00px;background:#9a9a9a;"></div>
<div class="a" style="left:140.50px;top:186.40px;width:3.00px;height:0.70px;background:#999;"></div>
<div class="lb" style="left:234.20px;top:144.70px;width:30.60px;overflow:hidden">Two flig<span style="font-size:4.6px;letter-spacing:-0.2px">…</span></div>
<div class="a" style="left:233.90px;top:150.80px;width:29.60px;height:64.00px;background:#fff;"></div>
<div class="a" style="left:235.80px;top:151.50px;width:0.80px;height:1.30px;background:#999;"></div>
<div class="a" style="left:238.90px;top:151.60px;width:6.70px;height:1.00px;background:#9a9a9a;"></div>
<div class="a" style="left:233.90px;top:155.00px;width:29.60px;height:0.70px;background:#efefef;"></div>
<div class="a" style="left:234.10px;top:154.80px;width:29.20px;height:11.70px;background:linear-gradient(to bottom,#1a1c1e 0%,#35475a 8%,#5a7a94 18%,#2a2c26 30%,#161614 62%,#5a3a14 74%,#b8742a 84%,#4c5a70 92%,#1c1e22 100%)"></div>
<div class="a" style="left:234.10px;top:155.97px;width:2.00px;height:9.36px;background:linear-gradient(to bottom,#6a8aa8,#4a6a48 50%,#3a4a50)"></div>
<div class="a" style="left:261.10px;top:155.97px;width:2.20px;height:9.36px;background:linear-gradient(to bottom,#8aa0b8,#5a7a4a 50%,#3a4a50)"></div>
<div class="a" style="left:236.40px;top:157.14px;width:0.40px;height:7.02px;background:#5a5030;"></div>
<div class="a" style="left:260.30px;top:157.14px;width:0.40px;height:7.02px;background:#5a5030;"></div>
<div class="a" style="left:243.60px;top:156.08px;width:9.00px;height:0.50px;background:#8a8a8a;"></div>
<div class="a" style="left:239.90px;top:157.90px;width:17.49px;height:3.63px;background:#121212;"></div>
<div class="t" style="left:240.70px;top:159.51px;font-size:3.3px;font-weight:bold;color:#f4f4f4;letter-spacing:-0.1px">Amsterdam</div>
<div class="a" style="left:235.40px;top:168.80px;width:5.00px;height:0.60px;background:#999;"></div>
<div class="a" style="left:260.10px;top:168.80px;width:1.50px;height:0.60px;background:#ccc;"></div>
<div class="a" style="left:234.90px;top:170.60px;width:28.60px;height:6.80px;background:linear-gradient(to bottom,#5a7aa0 0%,#3a4a3a 22%,#2a3a22 55%,#3a2e1c 75%,#0e0e0e 100%)"></div>
<div class="a" style="left:242.90px;top:172.30px;width:12.00px;height:4.00px;background:radial-gradient(ellipse at center,#6a5030 0%,rgba(60,50,30,0) 70%)"></div>
<div class="a" style="left:262.10px;top:170.60px;width:1.40px;height:6.80px;background:#2a3040;"></div>
<div class="a" style="left:235.40px;top:179.30px;width:8.00px;height:0.80px;background:#a2a2a2;"></div>
<div class="a" style="left:235.40px;top:184.60px;width:6.00px;height:0.70px;background:#8ab0d8;"></div>
<div class="a" style="left:234.90px;top:186.20px;width:28.60px;height:6.90px;background:linear-gradient(to bottom,#b8300e 0%,#d8501a 14%,#2a1a14 28%,#1e1e22 62%,#d8641e 72%,#e88a2a 88%,#c05a18 100%)"></div>
<div class="a" style="left:234.90px;top:190.60px;width:28.60px;height:2.50px;background:linear-gradient(to right,#d8641e 0%,#d8641e 18%,#c8c030 26%,#2a6ac8 34%,#e8842a 45%,#e8842a 60%,#2a6ac8 72%,#2a6ac8 82%,#d8641e 90%)"></div>
<div class="a" style="left:247.50px;top:188.30px;width:2.60px;height:2.40px;background:#e8ddd0;border-radius:0.5px;"></div>
<div class="a" style="left:262.10px;top:186.20px;width:1.40px;height:6.90px;background:#1a1a1a;"></div>
<div class="a" style="left:235.40px;top:195.20px;width:19.00px;height:0.90px;background:#8c8c8c;"></div>
<div class="a" style="left:235.40px;top:197.00px;width:8.00px;height:0.60px;background:#bbb;"></div>
<div class="a" style="left:235.40px;top:200.10px;width:7.00px;height:0.70px;background:#999;"></div>
<div class="a" style="left:260.40px;top:200.10px;width:1.20px;height:0.80px;background:#aaa;"></div>
<div class="a" style="left:234.90px;top:201.90px;width:28.60px;height:6.80px;background:linear-gradient(to bottom,#7a9ac8 0%,#5a7aa0 14%,#2a3a26 35%,#243a20 60%,#0e0e0e 100%)"></div>
<div class="a" style="left:237.20px;top:206.00px;width:22.50px;height:2.30px;background:#5d00ec;border-radius:0.6px;"></div>
<div class="a" style="left:238.10px;top:210.90px;width:1.60px;height:1.90px;background:#2a2a2a;border-radius:0.8px 0.8px 0.2px 0.2px"></div>
<div class="a" style="left:247.90px;top:210.90px;width:1.60px;height:1.90px;background:#2a2a2a;border-radius:0.8px 0.8px 0.2px 0.2px"></div>
<div class="a" style="left:257.70px;top:210.90px;width:1.60px;height:1.90px;background:#2a2a2a;border-radius:0.8px 0.8px 0.2px 0.2px"></div>
<div class="a" style="left:236.60px;top:213.20px;width:4.60px;height:0.70px;background:#c8b0fb;"></div>
<div class="lb" style="left:136.70px;top:217.30px;width:30.60px;overflow:hidden">Dashboa<span style="font-size:4.6px;letter-spacing:-0.2px">…</span></div>
<div class="a" style="left:136.40px;top:223.40px;width:29.60px;height:64.00px;background:#fff;"></div>
<div class="a" style="left:138.30px;top:224.10px;width:0.80px;height:1.30px;background:#999;"></div>
<div class="a" style="left:141.40px;top:224.20px;width:6.70px;height:1.00px;background:#9a9a9a;"></div>
<div class="a" style="left:136.40px;top:227.60px;width:29.60px;height:0.70px;background:#efefef;"></div>
<div class="a" style="left:137.70px;top:228.20px;width:27.00px;height:8.10px;background:#a87ef4;box-shadow:inset 0 0 0 0.5px #9a6cf0"></div>
<div class="a" style="left:138.40px;top:238.00px;width:19.00px;height:0.90px;background:#a2a2a2;"></div>
<div class="a" style="left:138.40px;top:239.20px;width:12.00px;height:0.90px;background:#a2a2a2;"></div>
<div class="a" style="left:138.40px;top:241.00px;width:24.00px;height:0.60px;background:#e4e4e4;"></div>
<div class="a" style="left:138.40px;top:242.20px;width:10.00px;height:0.60px;background:#e4e4e4;"></div>
<div class="a" style="left:137.70px;top:244.00px;width:27.00px;height:0.30px;background:#eee;"></div>
<div class="a" style="left:137.70px;top:244.90px;width:27.00px;height:8.00px;background:#a87ef4;box-shadow:inset 0 0 0 0.5px #9a6cf0"></div>
<div class="a" style="left:138.40px;top:254.70px;width:19.00px;height:0.90px;background:#a2a2a2;"></div>
<div class="a" style="left:138.40px;top:255.90px;width:8.00px;height:0.90px;background:#a2a2a2;"></div>
<div class="a" style="left:138.40px;top:257.80px;width:24.00px;height:0.60px;background:#e4e4e4;"></div>
<div class="a" style="left:138.40px;top:259.00px;width:14.00px;height:0.60px;background:#e4e4e4;"></div>
<div class="a" style="left:137.70px;top:260.80px;width:27.00px;height:0.30px;background:#eee;"></div>
<div class="a" style="left:137.70px;top:263.70px;width:27.00px;height:7.80px;background:#a87ef4;box-shadow:inset 0 0 0 0.5px #9a6cf0"></div>
<div class="a" style="left:138.40px;top:273.10px;width:20.00px;height:1.00px;background:#a2a2a2;"></div>
<div class="a" style="left:138.40px;top:275.60px;width:24.00px;height:0.60px;background:#e4e4e4;"></div>
<div class="a" style="left:138.40px;top:276.80px;width:24.00px;height:0.60px;background:#e4e4e4;"></div>
<div class="a" style="left:138.40px;top:278.20px;width:1.50px;height:0.80px;background:#a2a2a2;"></div>
<div class="a" style="left:140.60px;top:283.50px;width:1.60px;height:1.90px;background:#2a2a2a;border-radius:0.8px 0.8px 0.2px 0.2px"></div>
<div class="a" style="left:150.40px;top:283.50px;width:1.60px;height:1.90px;background:#2a2a2a;border-radius:0.8px 0.8px 0.2px 0.2px"></div>
<div class="a" style="left:160.20px;top:283.50px;width:1.60px;height:1.90px;background:#2a2a2a;border-radius:0.8px 0.8px 0.2px 0.2px"></div>
<div class="a" style="left:139.10px;top:285.80px;width:4.60px;height:0.70px;background:#c8b0fb;"></div>
<div class="lb" style="left:169.30px;top:217.30px;width:30.60px;overflow:hidden">Two flig<span style="font-size:4.6px;letter-spacing:-0.2px">…</span></div>
<div class="a" style="left:169.00px;top:223.40px;width:29.60px;height:64.00px;background:#fff;"></div>
<div class="a" style="left:170.90px;top:224.10px;width:0.80px;height:1.30px;background:#999;"></div>
<div class="a" style="left:174.00px;top:224.20px;width:6.70px;height:1.00px;background:#9a9a9a;"></div>
<div class="a" style="left:169.00px;top:227.60px;width:29.60px;height:0.70px;background:#efefef;"></div>
<div class="a" style="left:172.20px;top:230.10px;width:10.00px;height:0.80px;background:#a2a2a2;"></div>
<div class="a" style="left:172.20px;top:231.90px;width:12.00px;height:0.60px;background:#e4e4e4;"></div>
<div class="a" style="left:171.60px;top:235.20px;width:26.00px;height:4.20px;background:#fff;border-radius:1.5px;box-shadow:inset 0 0 0 0.4px #d0d0d0"></div>
<div class="a" style="left:172.80px;top:236.00px;width:4.00px;height:0.50px;background:#aaa;"></div>
<div class="a" style="left:172.80px;top:237.10px;width:3.00px;height:0.80px;background:#8c8c8c;"></div>
<div class="a" style="left:195.30px;top:236.50px;width:1.80px;height:1.80px;background:#8c8c8c;border-radius:0.9px;"></div>
<div class="a" style="left:172.80px;top:240.20px;width:8.00px;height:0.60px;background:#aaa;"></div>
<div class="a" style="left:171.60px;top:242.90px;width:26.00px;height:3.90px;background:#fff;border-radius:1.5px;box-shadow:inset 0 0 0 0.4px #d0d0d0"></div>
<div class="a" style="left:172.80px;top:243.70px;width:6.00px;height:0.50px;background:#aaa;"></div>
<div class="a" style="left:172.80px;top:244.70px;width:3.00px;height:0.80px;background:#8c8c8c;"></div>
<div class="a" style="left:195.50px;top:244.20px;width:1.20px;height:1.20px;background:#8c8c8c;"></div>
<div class="a" style="left:172.80px;top:247.60px;width:20.00px;height:0.60px;background:#e4e4e4;"></div>
<div class="a" style="left:172.80px;top:249.00px;width:6.00px;height:0.60px;background:#e4e4e4;"></div>
<div class="a" style="left:172.30px;top:274.60px;width:24.00px;height:0.20px;background:#eee;"></div>
<div class="a" style="left:172.20px;top:278.70px;width:22.80px;height:2.40px;background:#5d00ec;border-radius:1.2px;"></div>
<div class="a" style="left:173.20px;top:283.50px;width:1.60px;height:1.90px;background:#2a2a2a;border-radius:0.8px 0.8px 0.2px 0.2px"></div>
<div class="a" style="left:183.00px;top:283.50px;width:1.60px;height:1.90px;background:#2a2a2a;border-radius:0.8px 0.8px 0.2px 0.2px"></div>
<div class="a" style="left:192.80px;top:283.50px;width:1.60px;height:1.90px;background:#2a2a2a;border-radius:0.8px 0.8px 0.2px 0.2px"></div>
<div class="a" style="left:171.70px;top:285.80px;width:4.60px;height:0.70px;background:#c8b0fb;"></div>
<div class="lb" style="left:201.50px;top:217.30px;width:30.60px;overflow:hidden">Two flig<span style="font-size:4.6px;letter-spacing:-0.2px">…</span></div>
<div class="a" style="left:201.20px;top:223.40px;width:29.60px;height:64.00px;background:#fff;"></div>
<div class="a" style="left:203.10px;top:224.10px;width:0.80px;height:1.30px;background:#999;"></div>
<div class="a" style="left:206.20px;top:224.20px;width:6.70px;height:1.00px;background:#9a9a9a;"></div>
<div class="a" style="left:201.20px;top:227.60px;width:29.60px;height:0.70px;background:#efefef;"></div>
<div class="a" style="left:202.50px;top:228.60px;width:12.80px;height:10.40px;background:#a87ef4;box-shadow:inset 0 0 0 0.5px #9a6cf0"></div>
<div class="a" style="left:217.20px;top:228.60px;width:12.80px;height:10.40px;background:#a87ef4;box-shadow:inset 0 0 0 0.5px #9a6cf0"></div>
<div class="a" style="left:203.20px;top:241.20px;width:5.00px;height:0.90px;background:#a2a2a2;"></div>
<div class="a" style="left:203.20px;top:243.10px;width:10.00px;height:0.60px;background:#e4e4e4;"></div>
<div class="a" style="left:203.20px;top:244.20px;width:8.00px;height:0.60px;background:#e4e4e4;"></div>
<div class="a" style="left:217.90px;top:241.20px;width:5.00px;height:0.90px;background:#a2a2a2;"></div>
<div class="a" style="left:217.90px;top:243.10px;width:10.00px;height:0.60px;background:#e4e4e4;"></div>
<div class="a" style="left:217.90px;top:244.20px;width:8.00px;height:0.60px;background:#e4e4e4;"></div>
<div class="a" style="left:202.50px;top:247.00px;width:12.80px;height:10.40px;background:#a87ef4;box-shadow:inset 0 0 0 0.5px #9a6cf0"></div>
<div class="a" style="left:217.20px;top:247.00px;width:12.80px;height:10.40px;background:#a87ef4;box-shadow:inset 0 0 0 0.5px #9a6cf0"></div>
<div class="a" style="left:203.20px;top:259.60px;width:5.00px;height:0.90px;background:#a2a2a2;"></div>
<div class="a" style="left:203.20px;top:261.50px;width:10.00px;height:0.60px;background:#e4e4e4;"></div>
<div class="a" style="left:203.20px;top:262.60px;width:8.00px;height:0.60px;background:#e4e4e4;"></div>
<div class="a" style="left:217.90px;top:259.60px;width:5.00px;height:0.90px;background:#a2a2a2;"></div>
<div class="a" style="left:217.90px;top:261.50px;width:10.00px;height:0.60px;background:#e4e4e4;"></div>
<div class="a" style="left:217.90px;top:262.60px;width:8.00px;height:0.60px;background:#e4e4e4;"></div>
<div class="a" style="left:202.50px;top:265.70px;width:12.80px;height:10.40px;background:#a87ef4;box-shadow:inset 0 0 0 0.5px #9a6cf0"></div>
<div class="a" style="left:217.20px;top:265.70px;width:12.80px;height:10.40px;background:#a87ef4;box-shadow:inset 0 0 0 0.5px #9a6cf0"></div>
<div class="a" style="left:203.20px;top:278.30px;width:5.00px;height:0.90px;background:#a2a2a2;"></div>
<div class="a" style="left:203.20px;top:280.20px;width:10.00px;height:0.60px;background:#e4e4e4;"></div>
<div class="a" style="left:203.20px;top:281.30px;width:8.00px;height:0.60px;background:#e4e4e4;"></div>
<div class="a" style="left:217.90px;top:278.30px;width:5.00px;height:0.90px;background:#a2a2a2;"></div>
<div class="a" style="left:217.90px;top:280.20px;width:10.00px;height:0.60px;background:#e4e4e4;"></div>
<div class="a" style="left:217.90px;top:281.30px;width:8.00px;height:0.60px;background:#e4e4e4;"></div>
<div class="a" style="left:205.40px;top:283.50px;width:1.60px;height:1.90px;background:#2a2a2a;border-radius:0.8px 0.8px 0.2px 0.2px"></div>
<div class="a" style="left:215.20px;top:283.50px;width:1.60px;height:1.90px;background:#2a2a2a;border-radius:0.8px 0.8px 0.2px 0.2px"></div>
<div class="a" style="left:225.00px;top:283.50px;width:1.60px;height:1.90px;background:#2a2a2a;border-radius:0.8px 0.8px 0.2px 0.2px"></div>
<div class="a" style="left:203.90px;top:285.80px;width:4.60px;height:0.70px;background:#c8b0fb;"></div>
<div class="lb" style="left:234.20px;top:217.30px;width:30.60px;overflow:hidden">Two flig<span style="font-size:4.6px;letter-spacing:-0.2px">…</span></div>
<div class="a" style="left:233.90px;top:223.40px;width:29.60px;height:64.00px;background:#fff;"></div>
<div class="a" style="left:235.80px;top:224.10px;width:0.80px;height:1.30px;background:#999;"></div>
<div class="a" style="left:238.90px;top:224.20px;width:6.70px;height:1.00px;background:#9a9a9a;"></div>
<div class="a" style="left:233.90px;top:227.60px;width:29.60px;height:0.70px;background:#efefef;"></div>
<div class="a" style="left:236.20px;top:230.00px;width:9.00px;height:1.20px;background:#999;"></div>
<div class="a" style="left:236.20px;top:232.20px;width:12.00px;height:0.60px;background:#e4e4e4;"></div>
<div class="a" style="left:255.80px;top:228.30px;width:3.40px;height:3.40px;background:#111;border-radius:1.7px;"></div>
<div class="a" style="left:258.60px;top:228.30px;width:3.40px;height:3.40px;background:#111;border-radius:1.7px;"></div>
<div class="a" style="left:236.50px;top:234.60px;width:16.00px;height:0.70px;background:#a2a2a2;"></div>
<div class="a" style="left:256.20px;top:234.50px;width:3.00px;height:1.00px;background:#d7c3ff;border-radius:0.4px;"></div>
<div class="a" style="left:237.90px;top:238.00px;width:1.20px;height:1.60px;background:#9b6ff0;border-radius:0.4px;"></div>
<div class="a" style="left:239.90px;top:238.50px;width:3.00px;height:0.60px;background:#999;"></div>
<div class="a" style="left:245.20px;top:238.00px;width:1.20px;height:1.60px;background:#9b6ff0;border-radius:0.4px;"></div>
<div class="a" style="left:247.10px;top:238.50px;width:3.00px;height:0.60px;background:#999;"></div>
<div class="a" style="left:251.50px;top:238.00px;width:1.60px;height:1.60px;background:#b48cf8;border-radius:0.4px;"></div>
<div class="a" style="left:253.90px;top:238.50px;width:5.00px;height:0.60px;background:#999;"></div>
<div class="a" style="left:237.90px;top:240.60px;width:1.20px;height:1.60px;background:#9b6ff0;border-radius:0.4px;"></div>
<div class="a" style="left:239.90px;top:241.00px;width:5.00px;height:0.60px;background:#999;"></div>
<div class="a" style="left:247.30px;top:240.60px;width:1.20px;height:1.60px;background:#9b6ff0;border-radius:0.4px;"></div>
<div class="a" style="left:249.30px;top:241.00px;width:5.00px;height:0.60px;background:#999;"></div>
<div class="a" style="left:236.10px;top:245.20px;width:7.50px;height:0.60px;background:#9a9a9a;"></div>
<div class="a" style="left:260.10px;top:245.20px;width:1.20px;height:0.60px;background:#999;"></div>
<div class="a" style="left:234.10px;top:247.80px;width:29.20px;height:16.60px;background:linear-gradient(to bottom,#1a1c1e 0%,#35475a 8%,#5a7a94 18%,#2a2c26 30%,#161614 62%,#5a3a14 74%,#b8742a 84%,#4c5a70 92%,#1c1e22 100%)"></div>
<div class="a" style="left:234.10px;top:249.46px;width:2.00px;height:13.28px;background:linear-gradient(to bottom,#6a8aa8,#4a6a48 50%,#3a4a50)"></div>
<div class="a" style="left:261.10px;top:249.46px;width:2.20px;height:13.28px;background:linear-gradient(to bottom,#8aa0b8,#5a7a4a 50%,#3a4a50)"></div>
<div class="a" style="left:236.40px;top:251.12px;width:0.40px;height:9.96px;background:#5a5030;"></div>
<div class="a" style="left:260.30px;top:251.12px;width:0.40px;height:9.96px;background:#5a5030;"></div>
<div class="a" style="left:243.60px;top:253.08px;width:9.00px;height:0.50px;background:#8a8a8a;"></div>
<div class="a" style="left:240.20px;top:255.17px;width:20.14px;height:4.18px;background:#121212;"></div>
<div class="t" style="left:241.00px;top:257.06px;font-size:3.8px;font-weight:bold;color:#f4f4f4;letter-spacing:-0.1px">Amsterdam</div>
<div class="a" style="left:235.70px;top:266.90px;width:5.00px;height:0.60px;background:#999;"></div>
<div class="a" style="left:234.90px;top:269.00px;width:28.60px;height:6.40px;background:linear-gradient(to bottom,#5a7aa0 0%,#3a4a3a 22%,#2a3a22 55%,#3a2e1c 75%,#0e0e0e 100%)"></div>
<div class="a" style="left:235.70px;top:277.00px;width:8.00px;height:0.70px;background:#8ab070;"></div>
<div class="a" style="left:237.20px;top:279.00px;width:22.20px;height:2.20px;background:#5d00ec;border-radius:0.8px;"></div>
<div class="a" style="left:238.10px;top:283.50px;width:1.60px;height:1.90px;background:#2a2a2a;border-radius:0.8px 0.8px 0.2px 0.2px"></div>
<div class="a" style="left:247.90px;top:283.50px;width:1.60px;height:1.90px;background:#2a2a2a;border-radius:0.8px 0.8px 0.2px 0.2px"></div>
<div class="a" style="left:257.70px;top:283.50px;width:1.60px;height:1.90px;background:#2a2a2a;border-radius:0.8px 0.8px 0.2px 0.2px"></div>
<div class="a" style="left:236.60px;top:285.80px;width:4.60px;height:0.70px;background:#c8b0fb;"></div>
<div class="lb" style="left:266.30px;top:217.30px;width:30.60px;overflow:hidden">Two flig<span style="font-size:4.6px;letter-spacing:-0.2px">…</span></div>
<div class="a" style="left:266.00px;top:223.40px;width:29.60px;height:64.00px;background:#fff;"></div>
<div class="a" style="left:267.90px;top:224.10px;width:0.80px;height:1.30px;background:#999;"></div>
<div class="a" style="left:271.00px;top:224.20px;width:6.70px;height:1.00px;background:#9a9a9a;"></div>
<div class="a" style="left:266.00px;top:227.60px;width:29.60px;height:0.70px;background:#efefef;"></div>
<div class="a" style="left:270.30px;top:228.30px;width:23.00px;height:3.60px;background:#fff;"></div>
<div class="a" style="left:271.50px;top:229.20px;width:6.00px;height:1.40px;background:#a2a2a2;border-radius:0.3px;"></div>
<div class="a" style="left:271.50px;top:231.30px;width:10.00px;height:0.50px;background:#ccc;"></div>
<div class="a" style="left:267.30px;top:235.20px;width:11.20px;height:3.40px;background:#a87ef4;box-shadow:inset 0 0 0 0.5px #9a6cf0"></div>
<div class="a" style="left:284.00px;top:235.20px;width:10.30px;height:3.40px;background:#a87ef4;box-shadow:inset 0 0 0 0.5px #9a6cf0"></div>
<div class="a" style="left:278.80px;top:237.80px;width:4.20px;height:4.20px;background:#5d00ec;border-radius:2.1px;"></div>
<div class="a" style="left:267.90px;top:239.70px;width:6.00px;height:1.10px;background:#9a9a9a;"></div>
<div class="a" style="left:267.90px;top:241.60px;width:5.00px;height:0.60px;background:#e4e4e4;"></div>
<div class="a" style="left:284.60px;top:239.70px;width:6.00px;height:1.10px;background:#9a9a9a;"></div>
<div class="a" style="left:284.60px;top:241.60px;width:5.00px;height:0.60px;background:#e4e4e4;"></div>
<div class="a" style="left:267.30px;top:246.40px;width:11.20px;height:3.40px;background:#a87ef4;box-shadow:inset 0 0 0 0.5px #9a6cf0"></div>
<div class="a" style="left:284.00px;top:246.40px;width:10.30px;height:3.40px;background:#a87ef4;box-shadow:inset 0 0 0 0.5px #9a6cf0"></div>
<div class="a" style="left:278.80px;top:249.00px;width:4.20px;height:4.20px;background:#5d00ec;border-radius:2.1px;"></div>
<div class="a" style="left:267.90px;top:250.90px;width:6.00px;height:1.10px;background:#9a9a9a;"></div>
<div class="a" style="left:267.90px;top:252.80px;width:5.00px;height:0.60px;background:#e4e4e4;"></div>
<div class="a" style="left:284.60px;top:250.90px;width:6.00px;height:1.10px;background:#9a9a9a;"></div>
<div class="a" style="left:284.60px;top:252.80px;width:5.00px;height:0.60px;background:#e4e4e4;"></div>
<div class="a" style="left:267.30px;top:257.50px;width:11.20px;height:3.40px;background:#a87ef4;box-shadow:inset 0 0 0 0.5px #9a6cf0"></div>
<div class="a" style="left:284.00px;top:257.50px;width:10.30px;height:3.40px;background:#a87ef4;box-shadow:inset 0 0 0 0.5px #9a6cf0"></div>
<div class="a" style="left:278.80px;top:260.10px;width:4.20px;height:4.20px;background:#5d00ec;border-radius:2.1px;"></div>
<div class="a" style="left:267.90px;top:262.00px;width:6.00px;height:1.10px;background:#9a9a9a;"></div>
<div class="a" style="left:267.90px;top:263.90px;width:5.00px;height:0.60px;background:#e4e4e4;"></div>
<div class="a" style="left:284.60px;top:262.00px;width:6.00px;height:1.10px;background:#9a9a9a;"></div>
<div class="a" style="left:284.60px;top:263.90px;width:5.00px;height:0.60px;background:#e4e4e4;"></div>
<div class="a" style="left:267.30px;top:268.40px;width:11.20px;height:3.40px;background:#a87ef4;box-shadow:inset 0 0 0 0.5px #9a6cf0"></div>
<div class="a" style="left:284.00px;top:268.40px;width:10.30px;height:3.40px;background:#a87ef4;box-shadow:inset 0 0 0 0.5px #9a6cf0"></div>
<div class="a" style="left:278.80px;top:271.00px;width:4.20px;height:4.20px;background:#5d00ec;border-radius:2.1px;"></div>
<div class="a" style="left:267.90px;top:272.90px;width:6.00px;height:1.10px;background:#9a9a9a;"></div>
<div class="a" style="left:267.90px;top:274.80px;width:5.00px;height:0.60px;background:#e4e4e4;"></div>
<div class="a" style="left:284.60px;top:272.90px;width:6.00px;height:1.10px;background:#9a9a9a;"></div>
<div class="a" style="left:284.60px;top:274.80px;width:5.00px;height:0.60px;background:#e4e4e4;"></div>
<div class="a" style="left:267.30px;top:279.60px;width:11.20px;height:3.40px;background:#a87ef4;box-shadow:inset 0 0 0 0.5px #9a6cf0"></div>
<div class="a" style="left:284.00px;top:279.60px;width:10.30px;height:3.40px;background:#a87ef4;box-shadow:inset 0 0 0 0.5px #9a6cf0"></div>
<div class="a" style="left:278.80px;top:282.20px;width:4.20px;height:4.20px;background:#5d00ec;border-radius:2.1px;"></div>
<div class="a" style="left:267.90px;top:284.10px;width:6.00px;height:1.10px;background:#9a9a9a;"></div>
<div class="a" style="left:267.90px;top:286.00px;width:5.00px;height:0.60px;background:#e4e4e4;"></div>
<div class="a" style="left:284.60px;top:284.10px;width:6.00px;height:1.10px;background:#9a9a9a;"></div>
<div class="a" style="left:284.60px;top:286.00px;width:5.00px;height:0.60px;background:#e4e4e4;"></div>
<div class="a" style="left:276.00px;top:229.10px;width:18.60px;height:22.90px;background:#fff;border-radius:0.5px;box-shadow:0 0.3px 1px rgba(0,0,0,0.25)"></div>
<div class="a" style="left:277.60px;top:230.80px;width:6.00px;height:0.70px;background:#8c8c8c;"></div>
<div class="a" style="left:286.00px;top:230.80px;width:2.50px;height:0.70px;background:#a2a2a2;"></div>
<div class="a" style="left:291.80px;top:230.60px;width:1.00px;height:1.00px;background:#a2a2a2;"></div>
<div class="a" style="left:277.80px;top:233.50px;width:0.80px;height:0.50px;background:#c8c8c8;"></div>
<div class="a" style="left:280.10px;top:233.50px;width:0.80px;height:0.50px;background:#c8c8c8;"></div>
<div class="a" style="left:282.40px;top:233.50px;width:0.80px;height:0.50px;background:#c8c8c8;"></div>
<div class="a" style="left:284.70px;top:233.50px;width:0.80px;height:0.50px;background:#c8c8c8;"></div>
<div class="a" style="left:287.00px;top:233.50px;width:0.80px;height:0.50px;background:#c8c8c8;"></div>
<div class="a" style="left:289.30px;top:233.50px;width:0.80px;height:0.50px;background:#c8c8c8;"></div>
<div class="a" style="left:291.60px;top:233.50px;width:0.80px;height:0.50px;background:#c8c8c8;"></div>
<div class="a" style="left:277.80px;top:235.60px;width:0.80px;height:0.50px;background:#c8c8c8;"></div>
<div class="a" style="left:280.10px;top:235.60px;width:0.80px;height:0.50px;background:#c8c8c8;"></div>
<div class="a" style="left:282.40px;top:235.60px;width:0.80px;height:0.50px;background:#c8c8c8;"></div>
<div class="a" style="left:284.70px;top:235.60px;width:0.80px;height:0.50px;background:#c8c8c8;"></div>
<div class="a" style="left:287.00px;top:235.60px;width:0.80px;height:0.50px;background:#c8c8c8;"></div>
<div class="a" style="left:289.30px;top:235.60px;width:0.80px;height:0.50px;background:#c8c8c8;"></div>
<div class="a" style="left:291.60px;top:235.60px;width:0.80px;height:0.50px;background:#c8c8c8;"></div>
<div class="a" style="left:277.80px;top:237.80px;width:0.80px;height:0.50px;background:#c8c8c8;"></div>
<div class="a" style="left:280.10px;top:237.80px;width:0.80px;height:0.50px;background:#c8c8c8;"></div>
<div class="a" style="left:282.40px;top:237.80px;width:0.80px;height:0.50px;background:#c8c8c8;"></div>
<div class="a" style="left:284.70px;top:237.80px;width:0.80px;height:0.50px;background:#c8c8c8;"></div>
<div class="a" style="left:287.00px;top:237.80px;width:0.80px;height:0.50px;background:#c8c8c8;"></div>
<div class="a" style="left:289.30px;top:237.80px;width:0.80px;height:0.50px;background:#c8c8c8;"></div>
<div class="a" style="left:291.60px;top:237.80px;width:0.80px;height:0.50px;background:#c8c8c8;"></div>
<div class="a" style="left:277.80px;top:240.10px;width:0.80px;height:0.50px;background:#c8c8c8;"></div>
<div class="a" style="left:280.10px;top:240.10px;width:0.80px;height:0.50px;background:#c8c8c8;"></div>
<div class="a" style="left:282.40px;top:240.10px;width:0.80px;height:0.50px;background:#c8c8c8;"></div>
<div class="a" style="left:284.70px;top:240.10px;width:0.80px;height:0.50px;background:#c8c8c8;"></div>
<div class="a" style="left:287.00px;top:240.10px;width:0.80px;height:0.50px;background:#c8c8c8;"></div>
<div class="a" style="left:289.30px;top:240.10px;width:0.80px;height:0.50px;background:#c8c8c8;"></div>
<div class="a" style="left:291.60px;top:240.10px;width:0.80px;height:0.50px;background:#c8c8c8;"></div>
<div class="a" style="left:277.80px;top:242.80px;width:0.80px;height:0.50px;background:#c8c8c8;"></div>
<div class="a" style="left:280.10px;top:242.80px;width:0.80px;height:0.50px;background:#c8c8c8;"></div>
<div class="a" style="left:282.40px;top:242.80px;width:0.80px;height:0.50px;background:#c8c8c8;"></div>
<div class="a" style="left:284.70px;top:242.80px;width:0.80px;height:0.50px;background:#c8c8c8;"></div>
<div class="a" style="left:287.00px;top:242.80px;width:0.80px;height:0.50px;background:#c8c8c8;"></div>
<div class="a" style="left:289.30px;top:242.80px;width:0.80px;height:0.50px;background:#c8c8c8;"></div>
<div class="a" style="left:291.60px;top:242.80px;width:0.80px;height:0.50px;background:#c8c8c8;"></div>
<div class="a" style="left:277.80px;top:244.80px;width:0.80px;height:0.50px;background:#c8c8c8;"></div>
<div class="a" style="left:280.10px;top:244.80px;width:0.80px;height:0.50px;background:#c8c8c8;"></div>
<div class="a" style="left:282.40px;top:244.80px;width:0.80px;height:0.50px;background:#c8c8c8;"></div>
<div class="a" style="left:284.70px;top:244.80px;width:0.80px;height:0.50px;background:#c8c8c8;"></div>
<div class="a" style="left:287.00px;top:244.80px;width:0.80px;height:0.50px;background:#c8c8c8;"></div>
<div class="a" style="left:289.30px;top:244.80px;width:0.80px;height:0.50px;background:#c8c8c8;"></div>
<div class="a" style="left:291.60px;top:244.80px;width:0.80px;height:0.50px;background:#c8c8c8;"></div>
<div class="a" style="left:277.80px;top:247.10px;width:0.80px;height:0.50px;background:#c8c8c8;"></div>
<div class="a" style="left:280.10px;top:247.10px;width:0.80px;height:0.50px;background:#c8c8c8;"></div>
<div class="a" style="left:282.40px;top:247.10px;width:0.80px;height:0.50px;background:#c8c8c8;"></div>
<div class="a" style="left:284.70px;top:247.10px;width:0.80px;height:0.50px;background:#c8c8c8;"></div>
<div class="a" style="left:287.00px;top:247.10px;width:0.80px;height:0.50px;background:#c8c8c8;"></div>
<div class="a" style="left:289.30px;top:247.10px;width:0.80px;height:0.50px;background:#c8c8c8;"></div>
<div class="a" style="left:291.60px;top:247.10px;width:0.80px;height:0.50px;background:#c8c8c8;"></div>
<div class="a" style="left:286.30px;top:239.40px;width:2.00px;height:2.00px;background:#4a00f0;border-radius:1.0px;"></div>
<div class="a" style="left:290.50px;top:250.40px;width:2.50px;height:0.70px;background:#b48cf8;"></div>
<div class="a" style="left:279.80px;top:252.20px;width:2.40px;height:1.10px;background:#7f45f3;"></div>

<div class="a" style="left:270.20px;top:283.50px;width:1.60px;height:1.90px;background:#2a2a2a;border-radius:0.8px 0.8px 0.2px 0.2px"></div>
<div class="a" style="left:280.00px;top:283.50px;width:1.60px;height:1.90px;background:#2a2a2a;border-radius:0.8px 0.8px 0.2px 0.2px"></div>
<div class="a" style="left:289.80px;top:283.50px;width:1.60px;height:1.90px;background:#2a2a2a;border-radius:0.8px 0.8px 0.2px 0.2px"></div>
<div class="a" style="left:268.70px;top:285.80px;width:4.60px;height:0.70px;background:#c8b0fb;"></div>
<div class="a" style="left:297.1px;top:254.3px;width:4.1px;height:1.0px;background:#b48cf8"></div>
<div class="a" style="left:297.10px;top:256.50px;width:10.90px;height:10.30px;background:#fff;"></div>
<div class="a" style="left:297.60px;top:257.10px;width:10.20px;height:3.70px;background:#a87ef4;box-shadow:inset 0 0 0 0.4px #9a6cf0"></div>
<div class="a" style="left:298.40px;top:262.40px;width:2.60px;height:1.10px;background:#9a9a9a;"></div>
<div class="a" style="left:302.20px;top:262.40px;width:2.60px;height:1.10px;background:#9a9a9a;"></div>
<div class="a" style="left:298.40px;top:265.00px;width:5.50px;height:0.60px;background:#ccc;"></div>
<div class="lb" style="left:311.30px;top:217.30px;width:30.60px;overflow:hidden">Return fli<span style="font-size:4.6px;letter-spacing:-0.2px">…</span></div>
<div class="a" style="left:311.00px;top:223.40px;width:29.60px;height:64.00px;background:#fff;"></div>
<div class="a" style="left:312.90px;top:224.10px;width:0.80px;height:1.30px;background:#999;"></div>
<div class="a" style="left:316.00px;top:224.20px;width:6.70px;height:1.00px;background:#9a9a9a;"></div>
<div class="a" style="left:311.00px;top:227.60px;width:29.60px;height:0.70px;background:#efefef;"></div>
<div class="a" style="left:314.20px;top:228.80px;width:23.20px;height:3.40px;background:#fff;border-radius:1.0px;box-shadow:inset 0 0 0 0.4px #d0d0d0"></div>
<div class="a" style="left:315.30px;top:230.30px;width:2.00px;height:1.00px;background:#8c8c8c;"></div>
<div class="a" style="left:334.60px;top:229.70px;width:0.80px;height:1.40px;background:#a2a2a2;"></div>
<div class="a" style="left:315.00px;top:233.10px;width:20.00px;height:0.50px;background:#ccc;"></div>
<div class="a" style="left:314.20px;top:235.20px;width:23.20px;height:3.60px;background:#fff;border-radius:1.0px;box-shadow:inset 0 0 0 0.4px #d0d0d0"></div>
<div class="a" style="left:315.30px;top:236.70px;width:4.50px;height:1.00px;background:#9a9a9a;"></div>
<div class="a" style="left:315.00px;top:239.60px;width:16.00px;height:0.50px;background:#ccc;"></div>
<div class="a" style="left:312.20px;top:241.80px;width:10.80px;height:3.40px;background:#a87ef4;box-shadow:inset 0 0 0 0.5px #9a6cf0"></div>
<div class="a" style="left:328.40px;top:241.80px;width:10.80px;height:3.40px;background:#a87ef4;box-shadow:inset 0 0 0 0.5px #9a6cf0"></div>
<div class="a" style="left:323.80px;top:244.40px;width:4.20px;height:4.20px;background:#5d00ec;border-radius:2.1px;"></div>
<div class="a" style="left:312.80px;top:246.30px;width:6.00px;height:1.10px;background:#9a9a9a;"></div>
<div class="a" style="left:312.80px;top:248.20px;width:5.00px;height:0.60px;background:#e4e4e4;"></div>
<div class="a" style="left:329.00px;top:246.30px;width:6.00px;height:1.10px;background:#9a9a9a;"></div>
<div class="a" style="left:329.00px;top:248.20px;width:5.00px;height:0.60px;background:#e4e4e4;"></div>
<div class="a" style="left:312.20px;top:252.20px;width:10.80px;height:3.40px;background:#a87ef4;box-shadow:inset 0 0 0 0.5px #9a6cf0"></div>
<div class="a" style="left:328.40px;top:252.20px;width:10.80px;height:3.40px;background:#a87ef4;box-shadow:inset 0 0 0 0.5px #9a6cf0"></div>
<div class="a" style="left:323.80px;top:254.80px;width:4.20px;height:4.20px;background:#5d00ec;border-radius:2.1px;"></div>
<div class="a" style="left:312.80px;top:256.70px;width:6.00px;height:1.10px;background:#9a9a9a;"></div>
<div class="a" style="left:312.80px;top:258.60px;width:5.00px;height:0.60px;background:#e4e4e4;"></div>
<div class="a" style="left:329.00px;top:256.70px;width:6.00px;height:1.10px;background:#9a9a9a;"></div>
<div class="a" style="left:329.00px;top:258.60px;width:5.00px;height:0.60px;background:#e4e4e4;"></div>
<div class="a" style="left:312.20px;top:263.00px;width:10.80px;height:3.40px;background:#a87ef4;box-shadow:inset 0 0 0 0.5px #9a6cf0"></div>
<div class="a" style="left:328.40px;top:263.00px;width:10.80px;height:3.40px;background:#a87ef4;box-shadow:inset 0 0 0 0.5px #9a6cf0"></div>
<div class="a" style="left:323.80px;top:265.60px;width:4.20px;height:4.20px;background:#5d00ec;border-radius:2.1px;"></div>
<div class="a" style="left:312.80px;top:267.50px;width:6.00px;height:1.10px;background:#9a9a9a;"></div>
<div class="a" style="left:312.80px;top:269.40px;width:5.00px;height:0.60px;background:#e4e4e4;"></div>
<div class="a" style="left:329.00px;top:267.50px;width:6.00px;height:1.10px;background:#9a9a9a;"></div>
<div class="a" style="left:329.00px;top:269.40px;width:5.00px;height:0.60px;background:#e4e4e4;"></div>
<div class="a" style="left:313.00px;top:274.90px;width:25.60px;height:0.25px;background:#eee;"></div>
<div class="a" style="left:314.60px;top:279.70px;width:22.60px;height:2.30px;background:#5d00ec;border-radius:1.0px;"></div>
<div class="a" style="left:315.20px;top:283.50px;width:1.60px;height:1.90px;background:#2a2a2a;border-radius:0.8px 0.8px 0.2px 0.2px"></div>
<div class="a" style="left:325.00px;top:283.50px;width:1.60px;height:1.90px;background:#2a2a2a;border-radius:0.8px 0.8px 0.2px 0.2px"></div>
<div class="a" style="left:334.80px;top:283.50px;width:1.60px;height:1.90px;background:#2a2a2a;border-radius:0.8px 0.8px 0.2px 0.2px"></div>
<div class="a" style="left:313.70px;top:285.80px;width:4.60px;height:0.70px;background:#c8b0fb;"></div>
<div class="lb" style="left:343.90px;top:217.30px;width:30.60px;overflow:hidden">Find hot<span style="font-size:4.6px;letter-spacing:-0.2px">…</span></div>
<div class="a" style="left:343.60px;top:223.40px;width:29.60px;height:64.00px;background:#fff;"></div>
<div class="a" style="left:345.50px;top:224.10px;width:0.80px;height:1.30px;background:#999;"></div>
<div class="a" style="left:348.60px;top:224.20px;width:6.70px;height:1.00px;background:#9a9a9a;"></div>
<div class="a" style="left:343.60px;top:227.60px;width:29.60px;height:0.70px;background:#efefef;"></div>
<div class="a" style="left:344.40px;top:228.30px;width:13.60px;height:10.50px;background:#a87ef4;box-shadow:inset 0 0 0 0.5px #9a6cf0"></div>
<div class="a" style="left:359.20px;top:228.30px;width:13.10px;height:10.50px;background:#a87ef4;box-shadow:inset 0 0 0 0.5px #9a6cf0"></div>
<div class="a" style="left:345.10px;top:241.00px;width:7.00px;height:0.80px;background:#a2a2a2;"></div>
<div class="a" style="left:345.10px;top:243.00px;width:8.00px;height:0.60px;background:#e4e4e4;"></div>
<div class="a" style="left:345.10px;top:244.00px;width:7.00px;height:0.60px;background:#e4e4e4;"></div>
<div class="a" style="left:359.90px;top:241.00px;width:7.00px;height:0.80px;background:#a2a2a2;"></div>
<div class="a" style="left:359.90px;top:243.00px;width:8.00px;height:0.60px;background:#e4e4e4;"></div>
<div class="a" style="left:359.90px;top:244.00px;width:7.00px;height:0.60px;background:#e4e4e4;"></div>
<div class="a" style="left:344.40px;top:247.00px;width:13.60px;height:10.50px;background:#a87ef4;box-shadow:inset 0 0 0 0.5px #9a6cf0"></div>
<div class="a" style="left:359.20px;top:247.00px;width:13.10px;height:10.50px;background:#a87ef4;box-shadow:inset 0 0 0 0.5px #9a6cf0"></div>
<div class="a" style="left:345.10px;top:259.30px;width:7.00px;height:0.80px;background:#a2a2a2;"></div>
<div class="a" style="left:345.10px;top:261.30px;width:8.00px;height:0.60px;background:#e4e4e4;"></div>
<div class="a" style="left:345.10px;top:262.30px;width:7.00px;height:0.60px;background:#e4e4e4;"></div>
<div class="a" style="left:359.90px;top:259.30px;width:7.00px;height:0.80px;background:#a2a2a2;"></div>
<div class="a" style="left:359.90px;top:261.30px;width:8.00px;height:0.60px;background:#e4e4e4;"></div>
<div class="a" style="left:359.90px;top:262.30px;width:7.00px;height:0.60px;background:#e4e4e4;"></div>
<div class="a" style="left:344.40px;top:264.90px;width:13.60px;height:10.50px;background:#a87ef4;box-shadow:inset 0 0 0 0.5px #9a6cf0"></div>
<div class="a" style="left:359.20px;top:264.90px;width:13.10px;height:10.50px;background:#a87ef4;box-shadow:inset 0 0 0 0.5px #9a6cf0"></div>
<div class="a" style="left:345.10px;top:277.30px;width:7.00px;height:0.80px;background:#a2a2a2;"></div>
<div class="a" style="left:345.10px;top:279.30px;width:8.00px;height:0.60px;background:#e4e4e4;"></div>
<div class="a" style="left:345.10px;top:280.30px;width:7.00px;height:0.60px;background:#e4e4e4;"></div>
<div class="a" style="left:359.90px;top:277.30px;width:7.00px;height:0.80px;background:#a2a2a2;"></div>
<div class="a" style="left:359.90px;top:279.30px;width:8.00px;height:0.60px;background:#e4e4e4;"></div>
<div class="a" style="left:359.90px;top:280.30px;width:7.00px;height:0.60px;background:#e4e4e4;"></div>
<div class="a" style="left:347.80px;top:283.50px;width:1.60px;height:1.90px;background:#2a2a2a;border-radius:0.8px 0.8px 0.2px 0.2px"></div>
<div class="a" style="left:357.60px;top:283.50px;width:1.60px;height:1.90px;background:#2a2a2a;border-radius:0.8px 0.8px 0.2px 0.2px"></div>
<div class="a" style="left:367.40px;top:283.50px;width:1.60px;height:1.90px;background:#2a2a2a;border-radius:0.8px 0.8px 0.2px 0.2px"></div>
<div class="a" style="left:346.30px;top:285.80px;width:4.60px;height:0.70px;background:#c8b0fb;"></div>
<div class="lb" style="left:376.30px;top:217.30px;width:30.60px;overflow:hidden">Extra ser<span style="font-size:4.6px;letter-spacing:-0.2px">…</span></div>
<div class="a" style="left:376.00px;top:223.40px;width:29.60px;height:64.00px;background:#fff;"></div>
<div class="a" style="left:377.90px;top:224.10px;width:0.80px;height:1.30px;background:#999;"></div>
<div class="a" style="left:381.00px;top:224.20px;width:6.70px;height:1.00px;background:#9a9a9a;"></div>
<div class="a" style="left:376.00px;top:227.60px;width:29.60px;height:0.70px;background:#efefef;"></div>
<div class="a" style="left:377.30px;top:228.20px;width:26.90px;height:8.10px;background:#a87ef4;box-shadow:inset 0 0 0 0.5px #9a6cf0"></div>
<div class="a" style="left:378.20px;top:238.00px;width:11.00px;height:1.00px;background:#a2a2a2;"></div>
<div class="a" style="left:378.20px;top:240.50px;width:23.00px;height:0.60px;background:#e4e4e4;"></div>
<div class="a" style="left:378.20px;top:241.60px;width:12.00px;height:0.60px;background:#e4e4e4;"></div>
<div class="a" style="left:377.30px;top:243.80px;width:27.00px;height:0.30px;background:#eee;"></div>
<div class="a" style="left:377.30px;top:244.80px;width:26.90px;height:8.20px;background:#a87ef4;box-shadow:inset 0 0 0 0.5px #9a6cf0"></div>
<div class="a" style="left:378.20px;top:254.80px;width:22.00px;height:1.00px;background:#a2a2a2;"></div>
<div class="a" style="left:378.20px;top:257.40px;width:24.00px;height:0.60px;background:#e4e4e4;"></div>
<div class="a" style="left:378.20px;top:258.70px;width:12.00px;height:0.60px;background:#e4e4e4;"></div>
<div class="a" style="left:377.30px;top:260.40px;width:27.00px;height:0.30px;background:#eee;"></div>
<div class="a" style="left:377.30px;top:261.80px;width:26.90px;height:7.80px;background:#a87ef4;box-shadow:inset 0 0 0 0.5px #9a6cf0"></div>
<div class="a" style="left:378.20px;top:271.50px;width:19.00px;height:1.00px;background:#a2a2a2;"></div>
<div class="a" style="left:378.20px;top:274.10px;width:24.00px;height:0.60px;background:#e4e4e4;"></div>
<div class="a" style="left:378.20px;top:275.40px;width:15.00px;height:0.60px;background:#e4e4e4;"></div>
<div class="a" style="left:377.30px;top:277.00px;width:27.00px;height:0.30px;background:#eee;"></div>
<div class="a" style="left:379.20px;top:280.00px;width:22.60px;height:2.40px;background:#5d00ec;border-radius:1.0px;"></div>
<div class="a" style="left:380.20px;top:283.50px;width:1.60px;height:1.90px;background:#2a2a2a;border-radius:0.8px 0.8px 0.2px 0.2px"></div>
<div class="a" style="left:390.00px;top:283.50px;width:1.60px;height:1.90px;background:#2a2a2a;border-radius:0.8px 0.8px 0.2px 0.2px"></div>
<div class="a" style="left:399.80px;top:283.50px;width:1.60px;height:1.90px;background:#2a2a2a;border-radius:0.8px 0.8px 0.2px 0.2px"></div>
<div class="a" style="left:378.70px;top:285.80px;width:4.60px;height:0.70px;background:#c8b0fb;"></div>
<div class="lb" style="left:408.70px;top:217.30px;width:30.60px;overflow:hidden">Summar<span style="font-size:4.6px;letter-spacing:-0.2px">…</span></div>
<div class="a" style="left:408.40px;top:223.40px;width:29.60px;height:64.00px;background:#fff;"></div>
<div class="a" style="left:410.30px;top:224.10px;width:0.80px;height:1.30px;background:#999;"></div>
<div class="a" style="left:413.40px;top:224.20px;width:6.70px;height:1.00px;background:#9a9a9a;"></div>
<div class="a" style="left:408.40px;top:227.60px;width:29.60px;height:0.70px;background:#efefef;"></div>
<div class="a" style="left:410.40px;top:228.70px;width:8.00px;height:0.80px;background:#9a9a9a;"></div>
<div class="a" style="left:410.40px;top:230.30px;width:16.00px;height:0.50px;background:#c8e0a0;"></div>
<div class="a" style="left:409.60px;top:232.10px;width:10.90px;height:3.40px;background:#a87ef4;box-shadow:inset 0 0 0 0.5px #9a6cf0"></div>
<div class="a" style="left:426.30px;top:232.10px;width:10.50px;height:3.40px;background:#a87ef4;box-shadow:inset 0 0 0 0.5px #9a6cf0"></div>
<div class="a" style="left:421.10px;top:234.70px;width:4.20px;height:4.20px;background:#5d00ec;border-radius:2.1px;"></div>
<div class="a" style="left:410.20px;top:236.60px;width:6.00px;height:1.10px;background:#9a9a9a;"></div>
<div class="a" style="left:410.20px;top:238.50px;width:5.00px;height:0.60px;background:#e4e4e4;"></div>
<div class="a" style="left:426.90px;top:236.60px;width:6.00px;height:1.10px;background:#9a9a9a;"></div>
<div class="a" style="left:426.90px;top:238.50px;width:5.00px;height:0.60px;background:#e4e4e4;"></div>
<div class="a" style="left:409.20px;top:242.50px;width:13.20px;height:10.10px;background:#a87ef4;box-shadow:inset 0 0 0 0.5px #9a6cf0"></div>
<div class="a" style="left:424.10px;top:242.50px;width:12.90px;height:10.10px;background:#a87ef4;box-shadow:inset 0 0 0 0.5px #9a6cf0"></div>
<div class="a" style="left:409.90px;top:254.60px;width:6.00px;height:0.80px;background:#a2a2a2;"></div>
<div class="a" style="left:409.90px;top:256.60px;width:8.00px;height:0.60px;background:#e4e4e4;"></div>
<div class="a" style="left:409.90px;top:257.60px;width:7.00px;height:0.60px;background:#e4e4e4;"></div>
<div class="a" style="left:424.80px;top:254.60px;width:4.00px;height:0.80px;background:#a2a2a2;"></div>
<div class="a" style="left:424.80px;top:256.60px;width:8.00px;height:0.60px;background:#e4e4e4;"></div>
<div class="a" style="left:424.80px;top:257.60px;width:7.00px;height:0.60px;background:#e4e4e4;"></div>
<div class="a" style="left:409.20px;top:261.00px;width:13.20px;height:10.10px;background:#a87ef4;box-shadow:inset 0 0 0 0.5px #9a6cf0"></div>
<div class="a" style="left:424.10px;top:261.00px;width:12.90px;height:10.10px;background:#a87ef4;box-shadow:inset 0 0 0 0.5px #9a6cf0"></div>
<div class="a" style="left:409.90px;top:273.60px;width:6.00px;height:0.80px;background:#a2a2a2;"></div>
<div class="a" style="left:409.90px;top:275.60px;width:8.00px;height:0.60px;background:#e4e4e4;"></div>
<div class="a" style="left:409.90px;top:276.60px;width:7.00px;height:0.60px;background:#e4e4e4;"></div>
<div class="a" style="left:424.80px;top:273.60px;width:4.00px;height:0.80px;background:#a2a2a2;"></div>
<div class="a" style="left:424.80px;top:275.60px;width:8.00px;height:0.60px;background:#e4e4e4;"></div>
<div class="a" style="left:424.80px;top:276.60px;width:7.00px;height:0.60px;background:#e4e4e4;"></div>
<div class="a" style="left:411.40px;top:280.00px;width:22.20px;height:2.40px;background:#5d00ec;border-radius:1.0px;"></div>
<div class="a" style="left:412.60px;top:283.50px;width:1.60px;height:1.90px;background:#2a2a2a;border-radius:0.8px 0.8px 0.2px 0.2px"></div>
<div class="a" style="left:422.40px;top:283.50px;width:1.60px;height:1.90px;background:#2a2a2a;border-radius:0.8px 0.8px 0.2px 0.2px"></div>
<div class="a" style="left:432.20px;top:283.50px;width:1.60px;height:1.90px;background:#2a2a2a;border-radius:0.8px 0.8px 0.2px 0.2px"></div>
<div class="a" style="left:411.10px;top:285.80px;width:4.60px;height:0.70px;background:#c8b0fb;"></div>
<div class="lb" style="left:441.10px;top:217.30px;width:30.00px;overflow:hidden">Payment</div>
<div class="a" style="left:440.80px;top:223.40px;width:29.60px;height:64.00px;background:#fff;"></div>
<div class="a" style="left:442.70px;top:224.10px;width:0.80px;height:1.30px;background:#999;"></div>
<div class="a" style="left:445.80px;top:224.20px;width:6.70px;height:1.00px;background:#9a9a9a;"></div>
<div class="a" style="left:440.80px;top:227.60px;width:29.60px;height:0.70px;background:#efefef;"></div>
<div class="a" style="left:440.80px;top:227.80px;width:29.60px;height:54.40px;background:#dadada;"></div>
<div class="a" style="left:440.80px;top:227.30px;width:29.60px;height:1.80px;background:#2b2724;"></div>
<div class="a" style="left:440.80px;top:229.10px;width:29.60px;height:8.40px;background:#2f86dc;"></div>
<div class="a" style="left:442.30px;top:230.00px;width:8.00px;height:0.60px;background:#cfe3f7;"></div>
<div class="a" style="left:443.30px;top:232.00px;width:25.20px;height:31.80px;background:#fff;border-radius:0.8px;"></div>
<div class="a" style="left:444.80px;top:232.90px;width:3.20px;height:3.60px;background:#7a2d52;"></div>
<div class="a" style="left:449.30px;top:233.30px;width:4.00px;height:0.70px;background:#8c8c8c;"></div>
<div class="a" style="left:449.30px;top:235.00px;width:2.50px;height:0.60px;background:#8ab8ee;"></div>
<div class="a" style="left:444.00px;top:237.70px;width:23.80px;height:0.40px;background:#e6eef7;"></div>
<div class="a" style="left:444.00px;top:238.80px;width:8.00px;height:0.70px;background:#5a9ae6;"></div>
<div class="a" style="left:444.00px;top:241.00px;width:23.80px;height:2.40px;background:#eaf4fd;"></div>
<div class="a" style="left:444.60px;top:241.80px;width:5.00px;height:0.60px;background:#9a9a9a;"></div>
<div class="a" style="left:462.30px;top:241.70px;width:5.00px;height:0.90px;background:#c9a28a;"></div>
<div class="a" style="left:444.60px;top:244.70px;width:12.00px;height:0.60px;background:#aaa;"></div>
<div class="a" style="left:444.00px;top:246.80px;width:23.80px;height:2.40px;background:#eaf4fd;"></div>
<div class="a" style="left:444.60px;top:247.70px;width:5.00px;height:0.60px;background:#a2a2a2;"></div>
<div class="a" style="left:454.80px;top:247.70px;width:4.00px;height:0.60px;background:#a2a2a2;"></div>
<div class="a" style="left:462.80px;top:247.70px;width:4.00px;height:0.60px;background:#8ab8ee;"></div>
<div class="a" style="left:444.60px;top:250.50px;width:10.00px;height:0.60px;background:#aaa;"></div>
<div class="a" style="left:444.00px;top:252.00px;width:23.80px;height:2.40px;background:#eaf4fd;"></div>
<div class="a" style="left:444.60px;top:252.90px;width:5.00px;height:0.60px;background:#a2a2a2;"></div>
<div class="a" style="left:444.60px;top:255.60px;width:13.00px;height:0.60px;background:#aaa;"></div>
<div class="a" style="left:444.60px;top:257.00px;width:14.00px;height:0.60px;background:#ccc;"></div>
<div class="a" style="left:444.00px;top:257.40px;width:23.60px;height:2.20px;background:#1a73e8;border-radius:1.1px;"></div>
<div class="a" style="left:444.60px;top:261.40px;width:8.00px;height:0.70px;background:#8ab8ee;"></div>
<div class="a" style="left:448.80px;top:266.00px;width:13.00px;height:0.60px;background:#a8a8a8;"></div>
<div class="a" style="left:447.80px;top:268.00px;width:15.00px;height:0.60px;background:#b0b0b0;"></div>
<div class="a" style="left:452.30px;top:270.00px;width:6.00px;height:0.60px;background:#b0b0b0;"></div>
<div class="a" style="left:445.00px;top:283.50px;width:1.60px;height:1.90px;background:#2a2a2a;border-radius:0.8px 0.8px 0.2px 0.2px"></div>
<div class="a" style="left:454.80px;top:283.50px;width:1.60px;height:1.90px;background:#2a2a2a;border-radius:0.8px 0.8px 0.2px 0.2px"></div>
<div class="a" style="left:464.60px;top:283.50px;width:1.60px;height:1.90px;background:#2a2a2a;border-radius:0.8px 0.8px 0.2px 0.2px"></div>
<div class="a" style="left:443.50px;top:285.80px;width:4.60px;height:0.70px;background:#c8b0fb;"></div>
<div class="lb" style="left:473.30px;top:217.30px;width:30.60px;overflow:hidden">Booking i<span style="font-size:4.6px;letter-spacing:-0.2px">…</span></div>
<div class="a" style="left:473.00px;top:223.40px;width:29.60px;height:64.00px;background:#fff;"></div>
<div class="a" style="left:474.90px;top:224.10px;width:0.80px;height:1.30px;background:#999;"></div>
<div class="a" style="left:478.00px;top:224.20px;width:6.70px;height:1.00px;background:#9a9a9a;"></div>
<div class="a" style="left:473.00px;top:227.60px;width:29.60px;height:0.70px;background:#efefef;"></div>
<div class="a" style="left:475.10px;top:229.90px;width:18.60px;height:1.00px;background:#a2a2a2;"></div>
<div class="a" style="left:475.10px;top:232.00px;width:22.00px;height:0.60px;background:#e4e4e4;"></div>
<div class="a" style="left:475.10px;top:233.20px;width:18.00px;height:0.60px;background:#e4e4e4;"></div>
<div class="a" style="left:475.10px;top:235.90px;width:18.00px;height:0.50px;background:#e4e4e4;"></div>
<div class="a" style="left:477.20px;top:283.50px;width:1.60px;height:1.90px;background:#2a2a2a;border-radius:0.8px 0.8px 0.2px 0.2px"></div>
<div class="a" style="left:487.00px;top:283.50px;width:1.60px;height:1.90px;background:#2a2a2a;border-radius:0.8px 0.8px 0.2px 0.2px"></div>
<div class="a" style="left:496.80px;top:283.50px;width:1.60px;height:1.90px;background:#2a2a2a;border-radius:0.8px 0.8px 0.2px 0.2px"></div>
<div class="a" style="left:475.70px;top:285.80px;width:4.60px;height:0.70px;background:#c8b0fb;"></div>
<div class="lb" style="left:505.70px;top:217.30px;width:30.60px;overflow:hidden">Booking <span style="font-size:4.6px;letter-spacing:-0.2px">…</span></div>
<div class="a" style="left:505.40px;top:223.40px;width:29.60px;height:64.00px;background:#fff;"></div>
<div class="a" style="left:507.30px;top:224.10px;width:0.80px;height:1.30px;background:#999;"></div>
<div class="a" style="left:510.40px;top:224.20px;width:6.70px;height:1.00px;background:#9a9a9a;"></div>
<div class="a" style="left:505.40px;top:227.60px;width:29.60px;height:0.70px;background:#efefef;"></div>
<div class="a" style="left:506.90px;top:229.80px;width:24.00px;height:1.00px;background:#a2a2a2;"></div>
<div class="a" style="left:506.90px;top:231.80px;width:18.00px;height:0.60px;background:#e4e4e4;"></div>
<div class="a" style="left:506.70px;top:234.00px;width:27.20px;height:7.80px;background:#a87ef4;box-shadow:inset 0 0 0 0.5px #9a6cf0"></div>
<div class="a" style="left:506.90px;top:243.50px;width:17.00px;height:1.00px;background:#a2a2a2;"></div>
<div class="a" style="left:506.90px;top:246.00px;width:24.00px;height:0.60px;background:#e4e4e4;"></div>
<div class="a" style="left:506.90px;top:247.60px;width:10.00px;height:0.60px;background:#e4e4e4;"></div>
<div class="a" style="left:506.70px;top:249.20px;width:27.00px;height:0.30px;background:#eee;"></div>
<div class="a" style="left:506.70px;top:250.30px;width:27.20px;height:7.90px;background:#a87ef4;box-shadow:inset 0 0 0 0.5px #9a6cf0"></div>
<div class="a" style="left:506.90px;top:260.20px;width:14.00px;height:1.00px;background:#a2a2a2;"></div>
<div class="a" style="left:506.90px;top:262.60px;width:23.00px;height:0.60px;background:#e4e4e4;"></div>
<div class="a" style="left:506.90px;top:264.00px;width:20.00px;height:0.60px;background:#e4e4e4;"></div>
<div class="a" style="left:506.70px;top:265.40px;width:27.00px;height:0.30px;background:#eee;"></div>
<div class="a" style="left:506.70px;top:266.80px;width:27.20px;height:8.00px;background:#a87ef4;box-shadow:inset 0 0 0 0.5px #9a6cf0"></div>
<div class="a" style="left:506.90px;top:277.00px;width:11.00px;height:1.00px;background:#a2a2a2;"></div>
<div class="a" style="left:506.90px;top:279.40px;width:22.00px;height:0.60px;background:#e4e4e4;"></div>
<div class="a" style="left:506.90px;top:280.80px;width:15.00px;height:0.60px;background:#e4e4e4;"></div>
<div class="a" style="left:509.60px;top:283.50px;width:1.60px;height:1.90px;background:#2a2a2a;border-radius:0.8px 0.8px 0.2px 0.2px"></div>
<div class="a" style="left:519.40px;top:283.50px;width:1.60px;height:1.90px;background:#2a2a2a;border-radius:0.8px 0.8px 0.2px 0.2px"></div>
<div class="a" style="left:529.20px;top:283.50px;width:1.60px;height:1.90px;background:#2a2a2a;border-radius:0.8px 0.8px 0.2px 0.2px"></div>
<div class="a" style="left:508.10px;top:285.80px;width:4.60px;height:0.70px;background:#c8b0fb;"></div>
<div class="lb" style="left:538.10px;top:217.30px;width:30.60px;overflow:hidden">Booking<span style="font-size:4.6px;letter-spacing:-0.2px">…</span></div>
<div class="a" style="left:537.80px;top:223.40px;width:29.60px;height:64.00px;background:#fff;"></div>
<div class="a" style="left:539.70px;top:224.10px;width:0.80px;height:1.30px;background:#999;"></div>
<div class="a" style="left:542.80px;top:224.20px;width:6.70px;height:1.00px;background:#9a9a9a;"></div>
<div class="a" style="left:537.80px;top:227.60px;width:29.60px;height:0.70px;background:#efefef;"></div>
<div class="a" style="left:539.30px;top:228.60px;width:26.80px;height:6.20px;background:#a87ef4;box-shadow:inset 0 0 0 0.5px #9a6cf0"></div>
<div class="a" style="left:540.00px;top:236.70px;width:5.00px;height:0.80px;background:#a2a2a2;"></div>
<div class="a" style="left:540.00px;top:238.20px;width:9.00px;height:0.60px;background:#e4e4e4;"></div>
<div class="a" style="left:539.30px;top:241.80px;width:26.80px;height:6.60px;background:#a87ef4;box-shadow:inset 0 0 0 0.5px #9a6cf0"></div>
<div class="a" style="left:540.00px;top:249.70px;width:7.00px;height:0.80px;background:#a2a2a2;"></div>
<div class="a" style="left:540.00px;top:251.20px;width:12.00px;height:0.60px;background:#e4e4e4;"></div>
<div class="a" style="left:542.00px;top:283.50px;width:1.60px;height:1.90px;background:#2a2a2a;border-radius:0.8px 0.8px 0.2px 0.2px"></div>
<div class="a" style="left:551.80px;top:283.50px;width:1.60px;height:1.90px;background:#2a2a2a;border-radius:0.8px 0.8px 0.2px 0.2px"></div>
<div class="a" style="left:561.60px;top:283.50px;width:1.60px;height:1.90px;background:#2a2a2a;border-radius:0.8px 0.8px 0.2px 0.2px"></div>
<div class="a" style="left:550.30px;top:285.80px;width:4.60px;height:0.70px;background:#c8b0fb;"></div>
<div class="a" style="left:121.00px;top:223.70px;width:11.90px;height:9.40px;background:#bababa;border-radius:1.0px;"></div>
<div class="a" style="left:122.20px;top:224.80px;width:9.50px;height:4.80px;background:#a2a2a2;border-radius:0.5px;"></div>
<div class="a" style="left:122.20px;top:230.40px;width:9.50px;height:0.80px;background:#cfcfcf;"></div>
<div class="lb" style="left:136.70px;top:285.90px;width:30.60px;overflow:hidden">Feedback</div>
<div class="a" style="left:136.40px;top:292.00px;width:29.60px;height:64.00px;background:#fff;"></div>
<div class="a" style="left:138.30px;top:292.70px;width:0.80px;height:1.30px;background:#999;"></div>
<div class="a" style="left:141.40px;top:292.80px;width:6.70px;height:1.00px;background:#9a9a9a;"></div>
<div class="a" style="left:136.40px;top:296.20px;width:29.60px;height:0.70px;background:#efefef;"></div>
<div class="a" style="left:139.00px;top:298.20px;width:12.00px;height:0.90px;background:#8c8c8c;"></div>
<div class="a" style="left:139.00px;top:300.30px;width:24.00px;height:0.60px;background:#aaa;"></div>
<div class="a" style="left:139.00px;top:301.70px;width:7.00px;height:0.60px;background:#aaa;"></div>
<div class="a" style="left:139.80px;top:304.40px;width:23.00px;height:10.70px;background:#fff;border-radius:0.6px;box-shadow:inset 0 0 0 0.4px #d4d4d4"></div>
<div class="a" style="left:140.90px;top:306.80px;width:14.00px;height:0.80px;background:#9a9a9a;"></div>
<div class="a" style="left:161.20px;top:305.20px;width:1.40px;height:1.40px;background:#a2a2a2;"></div>
<div class="a" style="left:140.90px;top:308.90px;width:12.00px;height:0.40px;background:#ddd;"></div>
<div class="a" style="left:140.20px;top:316.10px;width:15.00px;height:0.60px;background:#999;"></div>
<div class="a" style="left:140.20px;top:318.20px;width:14.00px;height:0.40px;background:#ddd;"></div>
<div class="a" style="left:138.80px;top:346.60px;width:25.60px;height:0.25px;background:#eee;"></div>
<div class="a" style="left:140.00px;top:347.60px;width:22.40px;height:2.30px;background:#5d00ec;border-radius:1.0px;"></div>
<div class="a" style="left:140.60px;top:352.10px;width:1.60px;height:1.90px;background:#2a2a2a;border-radius:0.8px 0.8px 0.2px 0.2px"></div>
<div class="a" style="left:150.40px;top:352.10px;width:1.60px;height:1.90px;background:#2a2a2a;border-radius:0.8px 0.8px 0.2px 0.2px"></div>
<div class="a" style="left:160.20px;top:352.10px;width:1.60px;height:1.90px;background:#2a2a2a;border-radius:0.8px 0.8px 0.2px 0.2px"></div>
<div class="a" style="left:158.70px;top:354.40px;width:4.60px;height:0.70px;background:#c8b0fb;"></div>
<div class="lb" style="left:169.20px;top:285.90px;width:30.60px;overflow:hidden">My trips</div>
<div class="a" style="left:168.90px;top:292.00px;width:29.60px;height:64.00px;background:#fff;"></div>
<div class="a" style="left:170.80px;top:292.70px;width:0.80px;height:1.30px;background:#999;"></div>
<div class="a" style="left:173.90px;top:292.80px;width:6.70px;height:1.00px;background:#9a9a9a;"></div>
<div class="a" style="left:168.90px;top:296.20px;width:29.60px;height:0.70px;background:#efefef;"></div>
<div class="a" style="left:170.20px;top:297.20px;width:26.60px;height:6.70px;background:#a87ef4;box-shadow:inset 0 0 0 0.5px #9a6cf0"></div>
<div class="a" style="left:171.00px;top:305.50px;width:4.00px;height:1.00px;background:#8c8c8c;"></div>
<div class="a" style="left:171.00px;top:307.90px;width:6.00px;height:0.60px;background:#e4e4e4;"></div>
<div class="a" style="left:170.20px;top:308.40px;width:27.00px;height:0.30px;background:#eee;"></div>
<div class="a" style="left:190.00px;top:346.40px;width:6.60px;height:3.50px;background:#5d00ec;border-radius:1.75px;"></div>
<div class="a" style="left:173.10px;top:352.10px;width:1.60px;height:1.90px;background:#2a2a2a;border-radius:0.8px 0.8px 0.2px 0.2px"></div>
<div class="a" style="left:182.90px;top:352.10px;width:1.60px;height:1.90px;background:#2a2a2a;border-radius:0.8px 0.8px 0.2px 0.2px"></div>
<div class="a" style="left:192.70px;top:352.10px;width:1.60px;height:1.90px;background:#2a2a2a;border-radius:0.8px 0.8px 0.2px 0.2px"></div>
<div class="a" style="left:181.40px;top:354.40px;width:4.60px;height:0.70px;background:#c8b0fb;"></div>
<div class="lb" style="left:201.50px;top:285.90px;width:30.60px;overflow:hidden">My trips <span style="font-size:4.6px;letter-spacing:-0.2px">…</span></div>
<div class="a" style="left:201.20px;top:292.00px;width:29.60px;height:64.00px;background:#fff;"></div>
<div class="a" style="left:203.10px;top:292.70px;width:0.80px;height:1.30px;background:#999;"></div>
<div class="a" style="left:206.20px;top:292.80px;width:6.70px;height:1.00px;background:#9a9a9a;"></div>
<div class="a" style="left:201.20px;top:296.20px;width:29.60px;height:0.70px;background:#efefef;"></div>
<div class="a" style="left:205.40px;top:352.10px;width:1.60px;height:1.90px;background:#2a2a2a;border-radius:0.8px 0.8px 0.2px 0.2px"></div>
<div class="a" style="left:215.20px;top:352.10px;width:1.60px;height:1.90px;background:#2a2a2a;border-radius:0.8px 0.8px 0.2px 0.2px"></div>
<div class="a" style="left:225.00px;top:352.10px;width:1.60px;height:1.90px;background:#2a2a2a;border-radius:0.8px 0.8px 0.2px 0.2px"></div>
<div class="a" style="left:213.70px;top:354.40px;width:4.60px;height:0.70px;background:#c8b0fb;"></div>
<div class="lb" style="left:234.20px;top:285.90px;width:30.60px;overflow:hidden">My trips <span style="font-size:4.6px;letter-spacing:-0.2px">…</span></div>
<div class="a" style="left:233.90px;top:292.00px;width:29.60px;height:64.00px;background:#fff;"></div>
<div class="a" style="left:235.80px;top:292.70px;width:0.80px;height:1.30px;background:#999;"></div>
<div class="a" style="left:238.90px;top:292.80px;width:6.70px;height:1.00px;background:#9a9a9a;"></div>
<div class="a" style="left:233.90px;top:296.20px;width:29.60px;height:0.70px;background:#efefef;"></div>
<div class="a" style="left:238.10px;top:352.10px;width:1.60px;height:1.90px;background:#2a2a2a;border-radius:0.8px 0.8px 0.2px 0.2px"></div>
<div class="a" style="left:247.90px;top:352.10px;width:1.60px;height:1.90px;background:#2a2a2a;border-radius:0.8px 0.8px 0.2px 0.2px"></div>
<div class="a" style="left:257.70px;top:352.10px;width:1.60px;height:1.90px;background:#2a2a2a;border-radius:0.8px 0.8px 0.2px 0.2px"></div>
<div class="a" style="left:246.40px;top:354.40px;width:4.60px;height:0.70px;background:#c8b0fb;"></div>
<div class="lb" style="left:344.00px;top:285.90px;width:30.60px;overflow:hidden">Hotel de<span style="font-size:4.6px;letter-spacing:-0.2px">…</span></div>
<div class="a" style="left:343.70px;top:292.00px;width:29.60px;height:64.00px;background:#fff;"></div>
<div class="a" style="left:345.60px;top:292.70px;width:0.80px;height:1.30px;background:#999;"></div>
<div class="a" style="left:348.70px;top:292.80px;width:6.70px;height:1.00px;background:#9a9a9a;"></div>
<div class="a" style="left:343.70px;top:296.20px;width:29.60px;height:0.70px;background:#efefef;"></div>
<div class="a" style="left:346.10px;top:345.60px;width:25.00px;height:0.25px;background:#eee;"></div>
<div class="a" style="left:347.00px;top:347.60px;width:22.60px;height:2.60px;background:#5d00ec;border-radius:1.0px;"></div>
<div class="a" style="left:347.90px;top:352.10px;width:1.60px;height:1.90px;background:#2a2a2a;border-radius:0.8px 0.8px 0.2px 0.2px"></div>
<div class="a" style="left:357.70px;top:352.10px;width:1.60px;height:1.90px;background:#2a2a2a;border-radius:0.8px 0.8px 0.2px 0.2px"></div>
<div class="a" style="left:367.50px;top:352.10px;width:1.60px;height:1.90px;background:#2a2a2a;border-radius:0.8px 0.8px 0.2px 0.2px"></div>
<div class="a" style="left:346.40px;top:354.40px;width:4.60px;height:0.70px;background:#c8b0fb;"></div>
<div class="lb" style="left:376.40px;top:285.90px;width:30.60px;overflow:hidden">Extra ser<span style="font-size:4.6px;letter-spacing:-0.2px">…</span></div>
<div class="a" style="left:376.10px;top:292.00px;width:29.60px;height:64.00px;background:#fff;"></div>
<div class="a" style="left:378.00px;top:292.70px;width:0.80px;height:1.30px;background:#999;"></div>
<div class="a" style="left:381.10px;top:292.80px;width:6.70px;height:1.00px;background:#9a9a9a;"></div>
<div class="a" style="left:376.10px;top:296.20px;width:29.60px;height:0.70px;background:#efefef;"></div>
<div class="a" style="left:378.50px;top:345.60px;width:25.00px;height:0.25px;background:#eee;"></div>
<div class="a" style="left:379.40px;top:347.60px;width:22.60px;height:2.60px;background:#5d00ec;border-radius:1.0px;"></div>
<div class="a" style="left:380.30px;top:352.10px;width:1.60px;height:1.90px;background:#2a2a2a;border-radius:0.8px 0.8px 0.2px 0.2px"></div>
<div class="a" style="left:390.10px;top:352.10px;width:1.60px;height:1.90px;background:#2a2a2a;border-radius:0.8px 0.8px 0.2px 0.2px"></div>
<div class="a" style="left:399.90px;top:352.10px;width:1.60px;height:1.90px;background:#2a2a2a;border-radius:0.8px 0.8px 0.2px 0.2px"></div>
<div class="a" style="left:378.80px;top:354.40px;width:4.60px;height:0.70px;background:#c8b0fb;"></div>
<div class="lb" style="left:408.80px;top:285.90px;width:30.60px;overflow:hidden">Extra ser<span style="font-size:4.6px;letter-spacing:-0.2px">…</span></div>
<div class="a" style="left:408.50px;top:292.00px;width:29.60px;height:64.00px;background:#fff;"></div>
<div class="a" style="left:410.40px;top:292.70px;width:0.80px;height:1.30px;background:#999;"></div>
<div class="a" style="left:413.50px;top:292.80px;width:6.70px;height:1.00px;background:#9a9a9a;"></div>
<div class="a" style="left:408.50px;top:296.20px;width:29.60px;height:0.70px;background:#efefef;"></div>
<div class="a" style="left:410.90px;top:345.60px;width:25.00px;height:0.25px;background:#eee;"></div>
<div class="a" style="left:411.80px;top:347.60px;width:22.60px;height:2.60px;background:#5d00ec;border-radius:1.0px;"></div>
<div class="a" style="left:412.70px;top:352.10px;width:1.60px;height:1.90px;background:#2a2a2a;border-radius:0.8px 0.8px 0.2px 0.2px"></div>
<div class="a" style="left:422.50px;top:352.10px;width:1.60px;height:1.90px;background:#2a2a2a;border-radius:0.8px 0.8px 0.2px 0.2px"></div>
<div class="a" style="left:432.30px;top:352.10px;width:1.60px;height:1.90px;background:#2a2a2a;border-radius:0.8px 0.8px 0.2px 0.2px"></div>
<div class="a" style="left:411.20px;top:354.40px;width:4.60px;height:0.70px;background:#c8b0fb;"></div>
<div class="lb" style="left:441.20px;top:285.90px;width:30.60px;overflow:hidden">Extra ser<span style="font-size:4.6px;letter-spacing:-0.2px">…</span></div>
<div class="a" style="left:440.90px;top:292.00px;width:29.60px;height:64.00px;background:#fff;"></div>
<div class="a" style="left:442.80px;top:292.70px;width:0.80px;height:1.30px;background:#999;"></div>
<div class="a" style="left:445.90px;top:292.80px;width:6.70px;height:1.00px;background:#9a9a9a;"></div>
<div class="a" style="left:440.90px;top:296.20px;width:29.60px;height:0.70px;background:#efefef;"></div>
<div class="a" style="left:443.30px;top:345.60px;width:25.00px;height:0.25px;background:#eee;"></div>
<div class="a" style="left:444.20px;top:347.60px;width:22.60px;height:2.60px;background:#5d00ec;border-radius:1.0px;"></div>
<div class="a" style="left:445.10px;top:352.10px;width:1.60px;height:1.90px;background:#2a2a2a;border-radius:0.8px 0.8px 0.2px 0.2px"></div>
<div class="a" style="left:454.90px;top:352.10px;width:1.60px;height:1.90px;background:#2a2a2a;border-radius:0.8px 0.8px 0.2px 0.2px"></div>
<div class="a" style="left:464.70px;top:352.10px;width:1.60px;height:1.90px;background:#2a2a2a;border-radius:0.8px 0.8px 0.2px 0.2px"></div>
<div class="a" style="left:443.60px;top:354.40px;width:4.60px;height:0.70px;background:#c8b0fb;"></div>
<div class="lb" style="left:505.70px;top:285.90px;width:30.60px;overflow:hidden">Extra ser<span style="font-size:4.6px;letter-spacing:-0.2px">…</span></div>
<div class="a" style="left:505.40px;top:292.00px;width:29.60px;height:64.00px;background:#fff;"></div>
<div class="a" style="left:507.30px;top:292.70px;width:0.80px;height:1.30px;background:#999;"></div>
<div class="a" style="left:510.40px;top:292.80px;width:6.70px;height:1.00px;background:#9a9a9a;"></div>
<div class="a" style="left:505.40px;top:296.20px;width:29.60px;height:0.70px;background:#efefef;"></div>
<div class="a" style="left:507.80px;top:345.60px;width:25.00px;height:0.25px;background:#eee;"></div>
<div class="a" style="left:508.70px;top:347.60px;width:22.60px;height:2.60px;background:#5d00ec;border-radius:1.0px;"></div>
<div class="a" style="left:509.60px;top:352.10px;width:1.60px;height:1.90px;background:#2a2a2a;border-radius:0.8px 0.8px 0.2px 0.2px"></div>
<div class="a" style="left:519.40px;top:352.10px;width:1.60px;height:1.90px;background:#2a2a2a;border-radius:0.8px 0.8px 0.2px 0.2px"></div>
<div class="a" style="left:529.20px;top:352.10px;width:1.60px;height:1.90px;background:#2a2a2a;border-radius:0.8px 0.8px 0.2px 0.2px"></div>
<div class="a" style="left:508.10px;top:354.40px;width:4.60px;height:0.70px;background:#c8b0fb;"></div>
<div class="lb" style="left:169.30px;top:354.40px;width:30.60px;overflow:hidden">My trips <span style="font-size:4.6px;letter-spacing:-0.2px">…</span></div>
<div class="a" style="left:169.00px;top:360.50px;width:29.60px;height:64.00px;background:#fff;"></div>
<div class="a" style="left:170.90px;top:361.20px;width:0.80px;height:1.30px;background:#999;"></div>
<div class="a" style="left:174.00px;top:361.30px;width:6.70px;height:1.00px;background:#9a9a9a;"></div>
<div class="a" style="left:169.00px;top:364.70px;width:29.60px;height:0.70px;background:#efefef;"></div>
<div class="a" style="left:173.20px;top:420.60px;width:1.60px;height:1.90px;background:#2a2a2a;border-radius:0.8px 0.8px 0.2px 0.2px"></div>
<div class="a" style="left:183.00px;top:420.60px;width:1.60px;height:1.90px;background:#2a2a2a;border-radius:0.8px 0.8px 0.2px 0.2px"></div>
<div class="a" style="left:192.80px;top:420.60px;width:1.60px;height:1.90px;background:#2a2a2a;border-radius:0.8px 0.8px 0.2px 0.2px"></div>
<div class="a" style="left:181.50px;top:422.90px;width:4.60px;height:0.70px;background:#c8b0fb;"></div>
<div class="lb" style="left:201.50px;top:354.40px;width:30.60px;overflow:hidden">My trips <span style="font-size:4.6px;letter-spacing:-0.2px">…</span></div>
<div class="a" style="left:201.20px;top:360.50px;width:29.60px;height:64.00px;background:#fff;"></div>
<div class="a" style="left:203.10px;top:361.20px;width:0.80px;height:1.30px;background:#999;"></div>
<div class="a" style="left:206.20px;top:361.30px;width:6.70px;height:1.00px;background:#9a9a9a;"></div>
<div class="a" style="left:201.20px;top:364.70px;width:29.60px;height:0.70px;background:#efefef;"></div>
<div class="a" style="left:205.40px;top:420.60px;width:1.60px;height:1.90px;background:#2a2a2a;border-radius:0.8px 0.8px 0.2px 0.2px"></div>
<div class="a" style="left:215.20px;top:420.60px;width:1.60px;height:1.90px;background:#2a2a2a;border-radius:0.8px 0.8px 0.2px 0.2px"></div>
<div class="a" style="left:225.00px;top:420.60px;width:1.60px;height:1.90px;background:#2a2a2a;border-radius:0.8px 0.8px 0.2px 0.2px"></div>
<div class="a" style="left:213.70px;top:422.90px;width:4.60px;height:0.70px;background:#c8b0fb;"></div>
<div class="lb" style="left:234.00px;top:354.40px;width:30.60px;overflow:hidden">My trips <span style="font-size:4.6px;letter-spacing:-0.2px">…</span></div>
<div class="a" style="left:233.70px;top:360.50px;width:29.60px;height:64.00px;background:#fff;"></div>
<div class="a" style="left:235.60px;top:361.20px;width:0.80px;height:1.30px;background:#999;"></div>
<div class="a" style="left:238.70px;top:361.30px;width:6.70px;height:1.00px;background:#9a9a9a;"></div>
<div class="a" style="left:233.70px;top:364.70px;width:29.60px;height:0.70px;background:#efefef;"></div>
<div class="a" style="left:237.90px;top:420.60px;width:1.60px;height:1.90px;background:#2a2a2a;border-radius:0.8px 0.8px 0.2px 0.2px"></div>
<div class="a" style="left:247.70px;top:420.60px;width:1.60px;height:1.90px;background:#2a2a2a;border-radius:0.8px 0.8px 0.2px 0.2px"></div>
<div class="a" style="left:257.50px;top:420.60px;width:1.60px;height:1.90px;background:#2a2a2a;border-radius:0.8px 0.8px 0.2px 0.2px"></div>
<div class="a" style="left:246.20px;top:422.90px;width:4.60px;height:0.70px;background:#c8b0fb;"></div>
<div class="lb" style="left:266.20px;top:354.40px;width:30.60px;overflow:hidden">My trips <span style="font-size:4.6px;letter-spacing:-0.2px">…</span></div>
<div class="a" style="left:265.90px;top:360.50px;width:29.60px;height:64.00px;background:#fff;"></div>
<div class="a" style="left:267.80px;top:361.20px;width:0.80px;height:1.30px;background:#999;"></div>
<div class="a" style="left:270.90px;top:361.30px;width:6.70px;height:1.00px;background:#9a9a9a;"></div>
<div class="a" style="left:265.90px;top:364.70px;width:29.60px;height:0.70px;background:#efefef;"></div>
<div class="a" style="left:270.10px;top:420.60px;width:1.60px;height:1.90px;background:#2a2a2a;border-radius:0.8px 0.8px 0.2px 0.2px"></div>
<div class="a" style="left:279.90px;top:420.60px;width:1.60px;height:1.90px;background:#2a2a2a;border-radius:0.8px 0.8px 0.2px 0.2px"></div>
<div class="a" style="left:289.70px;top:420.60px;width:1.60px;height:1.90px;background:#2a2a2a;border-radius:0.8px 0.8px 0.2px 0.2px"></div>
<div class="a" style="left:278.40px;top:422.90px;width:4.60px;height:0.70px;background:#c8b0fb;"></div>
<div class="lb" style="left:298.60px;top:354.40px;width:30.60px;overflow:hidden">Two flig<span style="font-size:4.6px;letter-spacing:-0.2px">…</span></div>
<div class="a" style="left:298.30px;top:360.50px;width:29.60px;height:64.00px;background:#fff;"></div>
<div class="a" style="left:300.20px;top:361.20px;width:0.80px;height:1.30px;background:#999;"></div>
<div class="a" style="left:303.30px;top:361.30px;width:6.70px;height:1.00px;background:#9a9a9a;"></div>
<div class="a" style="left:298.30px;top:364.70px;width:29.60px;height:0.70px;background:#efefef;"></div>
<div class="a" style="left:301.90px;top:366.40px;width:22.80px;height:4.00px;background:#fff;border-radius:1.0px;box-shadow:inset 0 0 0 0.4px #cfcfcf"></div>
<div class="a" style="left:303.30px;top:367.90px;width:4.50px;height:0.90px;background:#9a9a9a;"></div>
<div class="a" style="left:303.30px;top:370.90px;width:7.00px;height:0.50px;background:#bde08a;"></div>
<div class="a" style="left:300.00px;top:372.90px;width:11.00px;height:3.40px;background:#a87ef4;box-shadow:inset 0 0 0 0.5px #9a6cf0"></div>
<div class="a" style="left:316.10px;top:372.90px;width:10.90px;height:3.40px;background:#a87ef4;box-shadow:inset 0 0 0 0.5px #9a6cf0"></div>
<div class="a" style="left:311.10px;top:375.50px;width:4.20px;height:4.20px;background:#5d00ec;border-radius:2.1px;"></div>
<div class="a" style="left:300.60px;top:377.40px;width:6.00px;height:1.10px;background:#9a9a9a;"></div>
<div class="a" style="left:300.60px;top:379.30px;width:5.00px;height:0.60px;background:#e4e4e4;"></div>
<div class="a" style="left:316.70px;top:377.40px;width:6.00px;height:1.10px;background:#9a9a9a;"></div>
<div class="a" style="left:316.70px;top:379.30px;width:5.00px;height:0.60px;background:#e4e4e4;"></div>
<div class="a" style="left:300.00px;top:383.80px;width:11.00px;height:3.40px;background:#a87ef4;box-shadow:inset 0 0 0 0.5px #9a6cf0"></div>
<div class="a" style="left:316.10px;top:383.80px;width:10.90px;height:3.40px;background:#a87ef4;box-shadow:inset 0 0 0 0.5px #9a6cf0"></div>
<div class="a" style="left:311.10px;top:386.40px;width:4.20px;height:4.20px;background:#5d00ec;border-radius:2.1px;"></div>
<div class="a" style="left:300.60px;top:388.30px;width:6.00px;height:1.10px;background:#9a9a9a;"></div>
<div class="a" style="left:300.60px;top:390.20px;width:5.00px;height:0.60px;background:#e4e4e4;"></div>
<div class="a" style="left:316.70px;top:388.30px;width:6.00px;height:1.10px;background:#9a9a9a;"></div>
<div class="a" style="left:316.70px;top:390.20px;width:5.00px;height:0.60px;background:#e4e4e4;"></div>
<div class="a" style="left:300.00px;top:394.50px;width:11.00px;height:3.40px;background:#a87ef4;box-shadow:inset 0 0 0 0.5px #9a6cf0"></div>
<div class="a" style="left:316.10px;top:394.50px;width:10.90px;height:3.40px;background:#a87ef4;box-shadow:inset 0 0 0 0.5px #9a6cf0"></div>
<div class="a" style="left:311.10px;top:397.10px;width:4.20px;height:4.20px;background:#5d00ec;border-radius:2.1px;"></div>
<div class="a" style="left:300.60px;top:399.00px;width:6.00px;height:1.10px;background:#9a9a9a;"></div>
<div class="a" style="left:300.60px;top:400.90px;width:5.00px;height:0.60px;background:#e4e4e4;"></div>
<div class="a" style="left:316.70px;top:399.00px;width:6.00px;height:1.10px;background:#9a9a9a;"></div>
<div class="a" style="left:316.70px;top:400.90px;width:5.00px;height:0.60px;background:#e4e4e4;"></div>
<div class="a" style="left:300.00px;top:405.40px;width:11.00px;height:3.40px;background:#a87ef4;box-shadow:inset 0 0 0 0.5px #9a6cf0"></div>
<div class="a" style="left:316.10px;top:405.40px;width:10.90px;height:3.40px;background:#a87ef4;box-shadow:inset 0 0 0 0.5px #9a6cf0"></div>
<div class="a" style="left:311.10px;top:408.00px;width:4.20px;height:4.20px;background:#5d00ec;border-radius:2.1px;"></div>
<div class="a" style="left:300.60px;top:409.90px;width:6.00px;height:1.10px;background:#9a9a9a;"></div>
<div class="a" style="left:300.60px;top:411.80px;width:5.00px;height:0.60px;background:#e4e4e4;"></div>
<div class="a" style="left:316.70px;top:409.90px;width:6.00px;height:1.10px;background:#9a9a9a;"></div>
<div class="a" style="left:316.70px;top:411.80px;width:5.00px;height:0.60px;background:#e4e4e4;"></div>
<div class="a" style="left:298.30px;top:411.10px;width:29.60px;height:5.40px;background:#fff;"></div>
<div class="a" style="left:300.90px;top:412.10px;width:3.80px;height:1.80px;background:#111;border-radius:0.9px;"></div>
<div class="a" style="left:306.10px;top:412.00px;width:16.00px;height:0.60px;background:#a2a2a2;"></div>
<div class="a" style="left:306.10px;top:413.40px;width:10.00px;height:0.60px;background:#999;"></div>
<div class="a" style="left:300.00px;top:416.50px;width:26.80px;height:4.00px;background:#fff;border-radius:0.5px;box-shadow:inset 0 0 0 0.45px #b48cf8"></div>
<div class="a" style="left:311.70px;top:417.80px;width:3.00px;height:3.00px;background:#9b6ff0;border-radius:1.5px;"></div>
<div class="a" style="left:318.30px;top:417.70px;width:4.00px;height:0.50px;background:#b48cf8;"></div>
<div class="a" style="left:302.50px;top:420.60px;width:1.60px;height:1.90px;background:#2a2a2a;border-radius:0.8px 0.8px 0.2px 0.2px"></div>
<div class="a" style="left:312.30px;top:420.60px;width:1.60px;height:1.90px;background:#2a2a2a;border-radius:0.8px 0.8px 0.2px 0.2px"></div>
<div class="a" style="left:322.10px;top:420.60px;width:1.60px;height:1.90px;background:#2a2a2a;border-radius:0.8px 0.8px 0.2px 0.2px"></div>
<div class="a" style="left:301.00px;top:422.90px;width:4.60px;height:0.70px;background:#c8b0fb;"></div>
<div class="a" style="left:261.50px;top:254.80px;width:14.60px;height:14.60px;background:#1f1f1f;box-shadow:0 1px 2.5px rgba(0,0,0,0.35);border-radius:7.3px 7.3px 7.3px 0"></div>
<div class="a" style="left:262.80px;top:256.10px;width:12.00px;height:12.00px;background:#6a79a5;border-radius:6.0px;"></div>
<div class="t" style="left:265.93px;top:257.75px;font-size:8.70px;color:#fff">S</div>
<div class="a" style="left:435.00px;top:211.80px;width:15.00px;height:15.00px;background:#1f1f1f;box-shadow:0 1px 2.5px rgba(0,0,0,0.35);border-radius:7.5px 7.5px 7.5px 0"></div>
<div class="a" style="left:436.50px;top:213.30px;width:12.00px;height:12.00px;background:#6a79a5;border-radius:6.0px;"></div>
<div class="t" style="left:439.63px;top:214.95px;font-size:8.70px;color:#fff">S</div>
<div class="a" style="left:549.30px;top:224.40px;width:30.80px;height:30.80px;background:#222222;border-radius:15.4px;box-shadow:0 1px 2.5px rgba(0,0,0,0.35);"></div>
<div class="a" style="left:561.00px;top:234.30px;width:11.00px;height:11.00px;background:#4f5875;border-radius:5.5px;"></div>
<div class="a" style="left:556.20px;top:233.60px;width:12.40px;height:12.40px;background:#222222;border-radius:6.2px;"></div>
<div class="a" style="left:556.90px;top:234.30px;width:11.00px;height:11.00px;background:#6a79a5;border-radius:5.5px;"></div>
<div class="t" style="left:559.77px;top:235.81px;font-size:7.97px;color:#fff">S</div>
<!--/CANVAS-->
</body></html>
